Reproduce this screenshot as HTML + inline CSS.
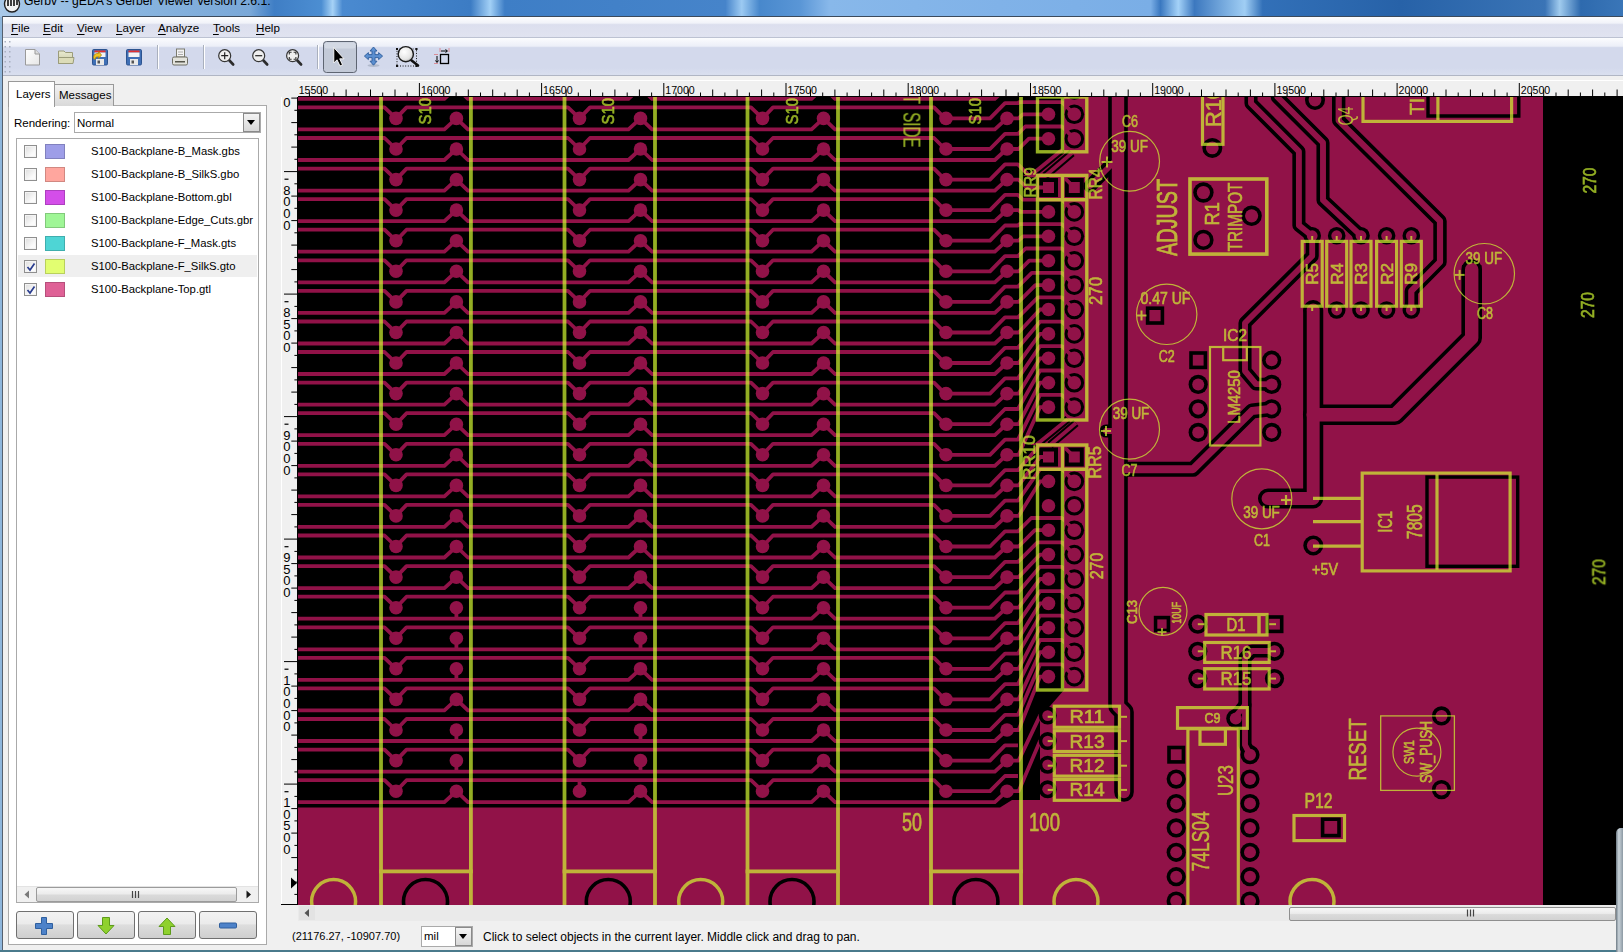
<!DOCTYPE html>
<html><head><meta charset="utf-8">
<style>
*{margin:0;padding:0;box-sizing:border-box}
html,body{width:1623px;height:952px;overflow:hidden;background:#f0f0f0;font-family:"Liberation Sans",sans-serif;color:#000}
.a{position:absolute}
.t{position:absolute;white-space:nowrap;line-height:1}
#title{left:0;top:0;width:1623px;height:17px;background:linear-gradient(90deg,#a9c9e9 0.0%,#8ab6e0 7.4%,#7aa8d8 15.4%,#3f7ec5 16.9%,#4c8ed2 19.8%,#a6d2f6 20.5%,#4a8ad0 21.1%,#3c7cc4 29.0%,#a2d0f6 30.2%,#3e7ec6 31.1%,#4684ca 44.7%,#9ccaf2 45.7%,#4888cc 46.8%,#5a96d6 49.3%,#88b8ea 51.1%,#80b2e8 61.6%,#7aaee6 70.9%,#3a78c0 71.5%,#a4d2f8 72.6%,#3c78bf 73.6%,#a0cef4 76.7%,#3270b8 77.8%,#2762a8 86.3%,#3a74b6 95.2%,#a0cbee 96.1%,#2e6aae 97.4%,#3a76b8 100.0%)}
#menubar{left:3px;top:17px;width:1620px;height:21px;background:linear-gradient(#fdfdfe 0%,#f1f3f9 30%,#dcdfee 38%,#e0e3f0 100%);border-bottom:1px solid #bcc2d2}
.menu{position:absolute;top:20.5px;font-size:11.6px}
.menu u{text-decoration:underline;text-underline-offset:2px;text-decoration-thickness:1px}
#toolbar{left:3px;top:38px;width:1620px;height:38px;background:linear-gradient(#fbfcfe 0%,#eceff8 22%,#d3d9ec 26%,#d3d9ec 80%,#d9dfef 100%);border-bottom:1px solid #b0b6c4}
.sep{position:absolute;top:45px;width:1px;height:24px;background:#a9b0bd;box-shadow:1px 0 0 #fff}
</style></head><body>
<div id="title" class="a"></div>
<svg class="a" style="left:3px;top:0" width="18" height="14" viewBox="0 0 18 14"><ellipse cx="9" cy="4" rx="7.5" ry="8" fill="#f2f2f2" stroke="#222" stroke-width="1.4"/><path d="M5,0 v6 M8,0 v6 M11,0 v6 M14,0 v5" stroke="#111" stroke-width="1.6"/></svg>
<div class="t" style="left:24px;top:-5px;font-size:12.2px;color:#000">Gerbv -- gEDA's Gerber Viewer version 2.6.1:</div>
<div class="a" style="left:0;top:17px;width:2px;height:935px;background:#8eb6dc"></div>
<div class="a" style="left:2px;top:16px;width:1621px;height:1px;background:#3b4a5c"></div>
<div class="a" style="left:2px;top:16px;width:1px;height:934px;background:#55606e"></div>
<div id="menubar" class="a"></div>
<div class="menu" style="left:11px"><u>F</u>ile</div>
<div class="menu" style="left:43px"><u>E</u>dit</div>
<div class="menu" style="left:77px"><u>V</u>iew</div>
<div class="menu" style="left:116px"><u>L</u>ayer</div>
<div class="menu" style="left:158px"><u>A</u>nalyze</div>
<div class="menu" style="left:213px"><u>T</u>ools</div>
<div class="menu" style="left:256px"><u>H</u>elp</div>
<div id="toolbar" class="a"></div>
<div class="sep" style="left:157px"></div>
<div class="sep" style="left:203px"></div>
<div class="sep" style="left:317px"></div>
<svg class="a" style="left:0;top:38px" width="470" height="38" viewBox="0 38 470 38">
<defs><linearGradient id="pg" x1="0" y1="0" x2="1" y2="1"><stop offset="0" stop-color="#ffffff"/><stop offset="1" stop-color="#e6e6e6"/></linearGradient><radialGradient id="lens" cx="0.4" cy="0.35" r="0.7"><stop offset="0" stop-color="#ffffff"/><stop offset="0.7" stop-color="#e4e4e4"/><stop offset="1" stop-color="#b0b0b0"/></radialGradient><linearGradient id="fl" x1="0" y1="0" x2="0" y2="1"><stop offset="0" stop-color="#e9ead0"/><stop offset="1" stop-color="#c9caa6"/></linearGradient></defs>
<rect x="4.5" y="41" width="1.5" height="1.5" fill="#a8b0c0"/><rect x="9" y="41" width="1.5" height="1.5" fill="#a8b0c0"/>
<rect x="4.5" y="46" width="1.5" height="1.5" fill="#a8b0c0"/><rect x="9" y="46" width="1.5" height="1.5" fill="#a8b0c0"/>
<rect x="4.5" y="51" width="1.5" height="1.5" fill="#a8b0c0"/><rect x="9" y="51" width="1.5" height="1.5" fill="#a8b0c0"/>
<rect x="4.5" y="56" width="1.5" height="1.5" fill="#a8b0c0"/><rect x="9" y="56" width="1.5" height="1.5" fill="#a8b0c0"/>
<rect x="4.5" y="61" width="1.5" height="1.5" fill="#a8b0c0"/><rect x="9" y="61" width="1.5" height="1.5" fill="#a8b0c0"/>
<rect x="4.5" y="66" width="1.5" height="1.5" fill="#a8b0c0"/><rect x="9" y="66" width="1.5" height="1.5" fill="#a8b0c0"/>
<rect x="4.5" y="71" width="1.5" height="1.5" fill="#a8b0c0"/><rect x="9" y="71" width="1.5" height="1.5" fill="#a8b0c0"/>
<path d="M25.5,49.5 H35 L39.5,54 V65 H25.5 Z" fill="url(#pg)" stroke="#9a9a9a" stroke-width="1"/>
<path d="M35,49.5 V54 H39.5" fill="#ddd" stroke="#9a9a9a" stroke-width="1"/>
<path d="M58.5,51 H64 L65.5,52.5 H72.5 V63.5 H58.5 Z" fill="url(#fl)" stroke="#9b9c7a" stroke-width="1"/>
<path d="M58.5,57.5 H74 L73,63.5 H58.5 Z" fill="#dcdcb8" stroke="#9b9c7a" stroke-width="1"/>
<rect x="92.5" y="49.5" width="15" height="15.5" rx="1.2" fill="#3f6fb5" stroke="#2c538f" stroke-width="1"/>
<rect x="94.5" y="50.5" width="11" height="2" fill="#e23030"/>
<rect x="94.5" y="52.5" width="11" height="4.5" fill="#f4f4f4"/>
<rect x="96.0" y="59" width="8" height="6" fill="#e8e8e8"/><rect x="97.5" y="60.5" width="2.5" height="3" fill="#555"/>
<path d="M93.5,58 q0,-5 5,-4.5 l0,-2 l3,3.5 l-3,3.5 l0,-2 q-3,-0.5 -3.5,3z" fill="#f2c41c" stroke="#a88310" stroke-width="0.8"/>
<rect x="126.5" y="49.5" width="15" height="15.5" rx="1.2" fill="#3f6fb5" stroke="#2c538f" stroke-width="1"/>
<rect x="128.5" y="50.5" width="11" height="2" fill="#e23030"/>
<rect x="128.5" y="52.5" width="11" height="4.5" fill="#f4f4f4"/>
<rect x="130.0" y="59" width="8" height="6" fill="#e8e8e8"/><rect x="131.5" y="60.5" width="2.5" height="3" fill="#555"/>
<rect x="176.5" y="49" width="8" height="8" fill="#f3f3f3" stroke="#7b7b6e" stroke-width="1"/>
<path d="M178,52 h5 M178,54.5 h5" stroke="#999" stroke-width="0.8"/>
<rect x="172.5" y="57" width="15" height="8" rx="1.5" fill="#e3e3dc" stroke="#6f6f64" stroke-width="1"/>
<rect x="175" y="61" width="10" height="1.5" fill="#55554a"/>
<path d="M229.0,60 L233.2,64.5" stroke="#2c2c2c" stroke-width="2.6" stroke-linecap="round"/>
<circle cx="224.7" cy="55.7" r="6" fill="#efefef" stroke="#353535" stroke-width="1.2"/>
<path d="M221.2,55.7 h7 M224.7,52.2 v7" stroke="#222" stroke-width="1.2"/>
<path d="M263.0,60 L267.2,64.5" stroke="#2c2c2c" stroke-width="2.6" stroke-linecap="round"/>
<circle cx="258.7" cy="55.7" r="6" fill="#efefef" stroke="#353535" stroke-width="1.2"/>
<path d="M255.2,55.7 h7" stroke="#222" stroke-width="1.2"/>
<path d="M296.9,60 L301.1,64.5" stroke="#2c2c2c" stroke-width="2.6" stroke-linecap="round"/>
<circle cx="292.6" cy="55.7" r="6" fill="#efefef" stroke="#353535" stroke-width="1.2"/>
<path d="M289.3,54.5 v-2.3 h2.3 M293.6,52.2 h2.3 v2.3 M295.9,57 v2.3 h-2.3 M291.6,59.3 h-2.3 v-2.3" fill="none" stroke="#333" stroke-width="1.1"/>
<rect x="323.5" y="41.5" width="33" height="31" rx="3" fill="#c3cad8" stroke="#5e6572" stroke-width="1"/>
<rect x="324.5" y="42.5" width="31" height="6" rx="2" fill="#d3d9e4"/>
<path d="M333.8,47.5 V63 L337,59.8 L340,66 L342.5,64.8 L339.7,58.8 H344 Z" fill="#000" stroke="#fff" stroke-width="0.9"/>
<ellipse cx="373.5" cy="65.5" rx="6" ry="1.5" fill="#9aa3b5" opacity="0.6"/>
<path d="M373.5,47 L377,51 H375 V54.6 H378.6 V52.6 L382.6,56.1 L378.6,59.6 V57.6 H375 V61.2 H377 L373.5,65.2 L370,61.2 H372 V57.6 H368.4 V59.6 L364.4,56.1 L368.4,52.6 V54.6 H372 V51 H370 Z" fill="#5b8fd0" stroke="#2e5c9c" stroke-width="0.9"/>
<rect x="397" y="49" width="19.5" height="17" fill="none" stroke="#111" stroke-width="1" stroke-dasharray="1,1.6"/>
<rect x="396.0" y="48.0" width="2" height="2" fill="#111"/>
<rect x="415.5" y="48.0" width="2" height="2" fill="#111"/>
<rect x="396.0" y="65.0" width="2" height="2" fill="#111"/>
<rect x="415.5" y="65.0" width="2" height="2" fill="#111"/>
<path d="M411,60 L418,65.5" stroke="#111" stroke-width="2.6" stroke-linecap="round"/>
<circle cx="405.8" cy="54.2" r="7.6" fill="url(#lens)" stroke="#1a1a1a" stroke-width="1.4"/>
<rect x="440.5" y="54.5" width="8" height="9" fill="none" stroke="#000" stroke-width="1.3"/>
<path d="M440,48.5 v4 M449,48.5 v4 M434.5,54.5 h4 M434.5,63.5 h4" stroke="#e03030" stroke-width="0.9" stroke-dasharray="1,1"/>
<path d="M441,51 h6 M445.5,49.5 l2,1.5 l-2,1.5 M437,56 v6 M435.5,60.5 l1.5,2 l1.5,-2" fill="none" stroke="#000" stroke-width="1"/>
</svg>

<!-- left panel -->
<div class="a" style="left:8px;top:105px;width:259px;height:840px;border:1px solid #aaa;background:#fff"></div>
<div class="a" style="left:54px;top:84px;width:60px;height:22px;border:1px solid #999;border-bottom:none;background:linear-gradient(#f2f2f2,#d9d9d9)"></div>
<div class="a" style="left:8px;top:81px;width:47px;height:26px;border:1px solid #999;border-bottom:none;background:#fff"></div>
<div class="t" style="left:16px;top:89px;font-size:11.5px">Layers</div>
<div class="t" style="left:59px;top:90px;font-size:11.5px">Messages</div>
<div class="t" style="left:14px;top:118px;font-size:11.5px">Rendering:</div>
<div class="a" style="left:74px;top:112px;width:187px;height:21px;border:1px solid #aaa;background:#fff"></div>
<div class="t" style="left:77px;top:118px;font-size:11.5px">Normal</div>
<div class="a" style="left:243px;top:113px;width:17px;height:19px;border:1px solid #8a8a8a;background:linear-gradient(#f4f4f4,#d8d8d8)"></div>
<div class="a" style="left:247px;top:120px;width:0;height:0;border-left:4.5px solid transparent;border-right:4.5px solid transparent;border-top:5px solid #000"></div>
<div class="a" style="left:16px;top:138px;width:243px;height:765px;border:1px solid #aaa;background:#fff"></div>
<div class="a" style="left:24px;top:145.0px;width:13px;height:13px;border:1px solid #8f8f8f;background:linear-gradient(135deg,#dcdcdc,#fbfbfb 70%);box-shadow:inset 0 0 0 1px #f4f4f4"></div>
<div class="a" style="left:45px;top:144.0px;width:20px;height:15px;background:rgb(158,158,232);border:1px solid rgba(0,0,0,0.18)"></div>
<div class="t" style="left:91px;top:146.2px;font-size:11.3px">S100-Backplane-B_Mask.gbs</div>
<div class="a" style="left:24px;top:168.0px;width:13px;height:13px;border:1px solid #8f8f8f;background:linear-gradient(135deg,#dcdcdc,#fbfbfb 70%);box-shadow:inset 0 0 0 1px #f4f4f4"></div>
<div class="a" style="left:45px;top:167.0px;width:20px;height:15px;background:rgb(255,166,158);border:1px solid rgba(0,0,0,0.18)"></div>
<div class="t" style="left:91px;top:169.2px;font-size:11.3px">S100-Backplane-B_SilkS.gbo</div>
<div class="a" style="left:24px;top:191.0px;width:13px;height:13px;border:1px solid #8f8f8f;background:linear-gradient(135deg,#dcdcdc,#fbfbfb 70%);box-shadow:inset 0 0 0 1px #f4f4f4"></div>
<div class="a" style="left:45px;top:190.0px;width:20px;height:15px;background:rgb(212,78,233);border:1px solid rgba(0,0,0,0.18)"></div>
<div class="t" style="left:91px;top:192.2px;font-size:11.3px">S100-Backplane-Bottom.gbl</div>
<div class="a" style="left:24px;top:214.0px;width:13px;height:13px;border:1px solid #8f8f8f;background:linear-gradient(135deg,#dcdcdc,#fbfbfb 70%);box-shadow:inset 0 0 0 1px #f4f4f4"></div>
<div class="a" style="left:45px;top:213.0px;width:20px;height:15px;background:rgb(159,246,150);border:1px solid rgba(0,0,0,0.18)"></div>
<div class="t" style="left:91px;top:215.2px;font-size:11.3px">S100-Backplane-Edge_Cuts.gbr</div>
<div class="a" style="left:24px;top:237.0px;width:13px;height:13px;border:1px solid #8f8f8f;background:linear-gradient(135deg,#dcdcdc,#fbfbfb 70%);box-shadow:inset 0 0 0 1px #f4f4f4"></div>
<div class="a" style="left:45px;top:236.0px;width:20px;height:15px;background:rgb(78,213,213);border:1px solid rgba(0,0,0,0.18)"></div>
<div class="t" style="left:91px;top:238.2px;font-size:11.3px">S100-Backplane-F_Mask.gts</div>
<div class="a" style="left:18px;top:255px;width:239px;height:22px;background:#efefef"></div>
<div class="a" style="left:24px;top:260.0px;width:13px;height:13px;border:1px solid #8f8f8f;background:linear-gradient(135deg,#dcdcdc,#fbfbfb 70%);box-shadow:inset 0 0 0 1px #f4f4f4"></div>
<svg class="a" style="left:26px;top:261.5px" width="10" height="10" viewBox="0 0 10 10"><path d="M1.5,5 L4,8 L8.5,1.5" fill="none" stroke="#2a3d8f" stroke-width="1.7"/></svg>
<div class="a" style="left:45px;top:259.0px;width:20px;height:15px;background:rgb(226,254,113);border:1px solid rgba(0,0,0,0.18)"></div>
<div class="t" style="left:91px;top:261.2px;font-size:11.3px">S100-Backplane-F_SilkS.gto</div>
<div class="a" style="left:24px;top:283.0px;width:13px;height:13px;border:1px solid #8f8f8f;background:linear-gradient(135deg,#dcdcdc,#fbfbfb 70%);box-shadow:inset 0 0 0 1px #f4f4f4"></div>
<svg class="a" style="left:26px;top:284.5px" width="10" height="10" viewBox="0 0 10 10"><path d="M1.5,5 L4,8 L8.5,1.5" fill="none" stroke="#2a3d8f" stroke-width="1.7"/></svg>
<div class="a" style="left:45px;top:282.0px;width:20px;height:15px;background:rgb(223,97,150);border:1px solid rgba(0,0,0,0.18)"></div>
<div class="t" style="left:91px;top:284.2px;font-size:11.3px">S100-Backplane-Top.gtl</div>
<!-- hscroll in list -->
<div class="a" style="left:17px;top:886px;width:241px;height:16px;background:#f0f0f0;border-top:1px solid #e3e3e3"></div>
<div class="a" style="left:36px;top:887px;width:201px;height:15px;border:1px solid #9b9b9b;border-radius:2px;background:linear-gradient(#f7f7f7 0%,#ececec 45%,#dadada 55%,#d2d2d2 100%)"></div>
<svg class="a" style="left:20px;top:887px" width="240" height="16" viewBox="20 887 240 16"><path d="M29,890.5 L24.5,894.5 L29,898.5Z" fill="#7a7a7a"/><path d="M246.5,890.5 L251,894.5 L246.5,898.5Z" fill="#1a1a1a"/><path d="M132.5,891 v7 M135.5,891 v7 M138.5,891 v7" stroke="#444" stroke-width="1.2"/></svg>
<div class="a" style="left:16px;top:911px;width:58px;height:28px;border:1px solid #707070;border-radius:3px;background:linear-gradient(#f2f2f2 0%,#ebebeb 45%,#dddddd 50%,#cfcfcf 100%)"></div>
<div class="a" style="left:77px;top:911px;width:58px;height:28px;border:1px solid #707070;border-radius:3px;background:linear-gradient(#f2f2f2 0%,#ebebeb 45%,#dddddd 50%,#cfcfcf 100%)"></div>
<div class="a" style="left:138px;top:911px;width:58px;height:28px;border:1px solid #707070;border-radius:3px;background:linear-gradient(#f2f2f2 0%,#ebebeb 45%,#dddddd 50%,#cfcfcf 100%)"></div>
<div class="a" style="left:199px;top:911px;width:58px;height:28px;border:1px solid #707070;border-radius:3px;background:linear-gradient(#f2f2f2 0%,#ebebeb 45%,#dddddd 50%,#cfcfcf 100%)"></div>
<svg class="a" style="left:34px;top:916px" width="20" height="20" viewBox="0 0 20 20"><path d="M7.5,1.5 h5 v6 h6 v5 h-6 v6 h-5 v-6 h-6 v-5 h6z" fill="#4d82c9" stroke="#2f5f9e" stroke-width="1"/></svg>
<svg class="a" style="left:96px;top:916px" width="20" height="20" viewBox="0 0 20 20"><path d="M6.5,1.5 h7 v8 h4.5 l-8,8.5 l-8,-8.5 h4.5z" fill="#8fd12e" stroke="#5d9b1a" stroke-width="1"/></svg>
<svg class="a" style="left:157px;top:916px" width="20" height="20" viewBox="0 0 20 20"><path d="M6.5,18.5 h7 v-8 h4.5 l-8,-8.5 l-8,8.5 h4.5z" fill="#8fd12e" stroke="#5d9b1a" stroke-width="1"/></svg>
<svg class="a" style="left:218px;top:921px" width="20" height="10" viewBox="0 0 20 10"><rect x="1.5" y="2" width="17" height="5" rx="1" fill="#4d82c9" stroke="#2f5f9e" stroke-width="1"/></svg>

<!-- rulers -->
<div class="a" style="left:298px;top:80px;width:1325px;height:17px;background:#f0f0f0;border-top:1px solid #fff"></div>
<div class="a" style="left:281px;top:97px;width:17px;height:808px;background:#f0f0f0;border-left:1px solid #fff"></div>
<div class="a" style="left:298px;top:96px;width:1325px;height:1px;background:#000"></div>
<div class="a" style="left:297px;top:97px;width:1px;height:808px;background:#000"></div>
<div class="a" style="left:281px;top:904px;width:17px;height:1px;background:#000"></div>
<svg class="a" style="left:0;top:0" width="1623" height="952" viewBox="0 0 1623 952"><defs><clipPath id="rc"><rect x="0" y="80" width="298" height="825"/><rect x="298" y="80" width="1325" height="17"/><rect x="0" y="98" width="1623" height="807"/></clipPath></defs><g clip-path="url(#rc)">
<path d="M309.4,92.5 V96 M321.6,89.5 V96 M333.9,92.5 V96 M346.1,89.5 V96 M358.3,92.5 V96 M370.5,89.5 V96 M382.7,92.5 V96 M395.0,89.5 V96 M407.2,92.5 V96 M419.4,83 V96 M431.6,92.5 V96 M443.8,89.5 V96 M456.1,92.5 V96 M468.3,89.5 V96 M480.5,92.5 V96 M492.7,89.5 V96 M504.9,92.5 V96 M517.2,89.5 V96 M529.4,92.5 V96 M541.6,83 V96 M553.8,92.5 V96 M566.1,89.5 V96 M578.3,92.5 V96 M590.5,89.5 V96 M602.7,92.5 V96 M614.9,89.5 V96 M627.2,92.5 V96 M639.4,89.5 V96 M651.6,92.5 V96 M663.8,83 V96 M676.0,92.5 V96 M688.3,89.5 V96 M700.5,92.5 V96 M712.7,89.5 V96 M724.9,92.5 V96 M737.1,89.5 V96 M749.4,92.5 V96 M761.6,89.5 V96 M773.8,92.5 V96 M786.0,83 V96 M798.3,92.5 V96 M810.5,89.5 V96 M822.7,92.5 V96 M834.9,89.5 V96 M847.1,92.5 V96 M859.4,89.5 V96 M871.6,92.5 V96 M883.8,89.5 V96 M896.0,92.5 V96 M908.2,83 V96 M920.5,92.5 V96 M932.7,89.5 V96 M944.9,92.5 V96 M957.1,89.5 V96 M969.3,92.5 V96 M981.6,89.5 V96 M993.8,92.5 V96 M1006.0,89.5 V96 M1018.2,92.5 V96 M1030.5,83 V96 M1042.7,92.5 V96 M1054.9,89.5 V96 M1067.1,92.5 V96 M1079.3,89.5 V96 M1091.6,92.5 V96 M1103.8,89.5 V96 M1116.0,92.5 V96 M1128.2,89.5 V96 M1140.4,92.5 V96 M1152.7,83 V96 M1164.9,92.5 V96 M1177.1,89.5 V96 M1189.3,92.5 V96 M1201.5,89.5 V96 M1213.8,92.5 V96 M1226.0,89.5 V96 M1238.2,92.5 V96 M1250.4,89.5 V96 M1262.6,92.5 V96 M1274.9,83 V96 M1287.1,92.5 V96 M1299.3,89.5 V96 M1311.5,92.5 V96 M1323.8,89.5 V96 M1336.0,92.5 V96 M1348.2,89.5 V96 M1360.4,92.5 V96 M1372.6,89.5 V96 M1384.9,92.5 V96 M1397.1,83 V96 M1409.3,92.5 V96 M1421.5,89.5 V96 M1433.7,92.5 V96 M1446.0,89.5 V96 M1458.2,92.5 V96 M1470.4,89.5 V96 M1482.6,92.5 V96 M1494.8,89.5 V96 M1507.1,92.5 V96 M1519.3,83 V96 M1531.5,92.5 V96 M1543.7,89.5 V96 M1556.0,92.5 V96 M1568.2,89.5 V96 M1580.4,92.5 V96 M1592.6,89.5 V96 M1604.8,92.5 V96 M1617.1,89.5 V96" stroke="#000" stroke-width="1" fill="none"/>
<text x="298.7" y="93.6" font-family="Liberation Sans" font-size="10.6" fill="#000">15500</text>
<text x="420.9" y="93.6" font-family="Liberation Sans" font-size="10.6" fill="#000">16000</text>
<text x="543.1" y="93.6" font-family="Liberation Sans" font-size="10.6" fill="#000">16500</text>
<text x="665.3" y="93.6" font-family="Liberation Sans" font-size="10.6" fill="#000">17000</text>
<text x="787.5" y="93.6" font-family="Liberation Sans" font-size="10.6" fill="#000">17500</text>
<text x="909.7" y="93.6" font-family="Liberation Sans" font-size="10.6" fill="#000">18000</text>
<text x="1032.0" y="93.6" font-family="Liberation Sans" font-size="10.6" fill="#000">18500</text>
<text x="1154.2" y="93.6" font-family="Liberation Sans" font-size="10.6" fill="#000">19000</text>
<text x="1276.4" y="93.6" font-family="Liberation Sans" font-size="10.6" fill="#000">19500</text>
<text x="1398.6" y="93.6" font-family="Liberation Sans" font-size="10.6" fill="#000">20000</text>
<text x="1520.8" y="93.6" font-family="Liberation Sans" font-size="10.6" fill="#000">20500</text>
<path d="M291.3,98.1 H297 M294.4,110.3 H297 M291.3,122.6 H297 M294.4,134.8 H297 M291.3,147.1 H297 M294.4,159.3 H297 M284,171.6 H297 M294.4,183.8 H297 M291.3,196.1 H297 M294.4,208.3 H297 M291.3,220.6 H297 M294.4,232.8 H297 M291.3,245.1 H297 M294.4,257.4 H297 M291.3,269.6 H297 M294.4,281.9 H297 M284,294.1 H297 M294.4,306.4 H297 M291.3,318.6 H297 M294.4,330.9 H297 M291.3,343.1 H297 M294.4,355.4 H297 M291.3,367.6 H297 M294.4,379.9 H297 M291.3,392.1 H297 M294.4,404.4 H297 M284,416.6 H297 M294.4,428.9 H297 M291.3,441.1 H297 M294.4,453.4 H297 M291.3,465.6 H297 M294.4,477.9 H297 M291.3,490.1 H297 M294.4,502.4 H297 M291.3,514.6 H297 M294.4,526.9 H297 M284,539.1 H297 M294.4,551.4 H297 M291.3,563.6 H297 M294.4,575.9 H297 M291.3,588.1 H297 M294.4,600.4 H297 M291.3,612.6 H297 M294.4,624.9 H297 M291.3,637.1 H297 M294.4,649.4 H297 M284,661.6 H297 M294.4,673.9 H297 M291.3,686.1 H297 M294.4,698.4 H297 M291.3,710.6 H297 M294.4,722.9 H297 M291.3,735.1 H297 M294.4,747.4 H297 M291.3,759.6 H297 M294.4,771.9 H297 M284,784.1 H297 M294.4,796.4 H297 M291.3,808.6 H297 M294.4,820.9 H297 M291.3,833.1 H297 M294.4,845.4 H297 M291.3,857.6 H297 M294.4,869.9 H297 M291.3,882.1 H297 M294.4,894.4 H297" stroke="#000" stroke-width="1" fill="none"/>
<rect x="284.5" y="56.1" width="4" height="1.2" fill="#000"/>
<text x="283.2" y="107.0" font-family="Liberation Sans" font-size="13" transform="scale(1,1)" fill="#000">0</text>
<rect x="284.5" y="178.6" width="4" height="1.2" fill="#000"/>
<text x="283.2" y="194.7" font-family="Liberation Sans" font-size="13" transform="scale(1,1)" fill="#000">8</text>
<text x="283.2" y="206.3" font-family="Liberation Sans" font-size="13" transform="scale(1,1)" fill="#000">0</text>
<text x="283.2" y="217.9" font-family="Liberation Sans" font-size="13" transform="scale(1,1)" fill="#000">0</text>
<text x="283.2" y="229.5" font-family="Liberation Sans" font-size="13" transform="scale(1,1)" fill="#000">0</text>
<rect x="284.5" y="301.1" width="4" height="1.2" fill="#000"/>
<text x="283.2" y="317.2" font-family="Liberation Sans" font-size="13" transform="scale(1,1)" fill="#000">8</text>
<text x="283.2" y="328.8" font-family="Liberation Sans" font-size="13" transform="scale(1,1)" fill="#000">5</text>
<text x="283.2" y="340.4" font-family="Liberation Sans" font-size="13" transform="scale(1,1)" fill="#000">0</text>
<text x="283.2" y="352.0" font-family="Liberation Sans" font-size="13" transform="scale(1,1)" fill="#000">0</text>
<rect x="284.5" y="423.6" width="4" height="1.2" fill="#000"/>
<text x="283.2" y="439.7" font-family="Liberation Sans" font-size="13" transform="scale(1,1)" fill="#000">9</text>
<text x="283.2" y="451.3" font-family="Liberation Sans" font-size="13" transform="scale(1,1)" fill="#000">0</text>
<text x="283.2" y="462.9" font-family="Liberation Sans" font-size="13" transform="scale(1,1)" fill="#000">0</text>
<text x="283.2" y="474.5" font-family="Liberation Sans" font-size="13" transform="scale(1,1)" fill="#000">0</text>
<rect x="284.5" y="546.1" width="4" height="1.2" fill="#000"/>
<text x="283.2" y="562.2" font-family="Liberation Sans" font-size="13" transform="scale(1,1)" fill="#000">9</text>
<text x="283.2" y="573.8" font-family="Liberation Sans" font-size="13" transform="scale(1,1)" fill="#000">5</text>
<text x="283.2" y="585.4" font-family="Liberation Sans" font-size="13" transform="scale(1,1)" fill="#000">0</text>
<text x="283.2" y="597.0" font-family="Liberation Sans" font-size="13" transform="scale(1,1)" fill="#000">0</text>
<rect x="284.5" y="668.6" width="4" height="1.2" fill="#000"/>
<text x="283.2" y="684.7" font-family="Liberation Sans" font-size="13" transform="scale(1,1)" fill="#000">1</text>
<text x="283.2" y="696.3" font-family="Liberation Sans" font-size="13" transform="scale(1,1)" fill="#000">0</text>
<text x="283.2" y="707.9" font-family="Liberation Sans" font-size="13" transform="scale(1,1)" fill="#000">0</text>
<text x="283.2" y="719.5" font-family="Liberation Sans" font-size="13" transform="scale(1,1)" fill="#000">0</text>
<text x="283.2" y="731.1" font-family="Liberation Sans" font-size="13" transform="scale(1,1)" fill="#000">0</text>
<rect x="284.5" y="791.1" width="4" height="1.2" fill="#000"/>
<text x="283.2" y="807.2" font-family="Liberation Sans" font-size="13" transform="scale(1,1)" fill="#000">1</text>
<text x="283.2" y="818.8" font-family="Liberation Sans" font-size="13" transform="scale(1,1)" fill="#000">0</text>
<text x="283.2" y="830.4" font-family="Liberation Sans" font-size="13" transform="scale(1,1)" fill="#000">5</text>
<text x="283.2" y="842.0" font-family="Liberation Sans" font-size="13" transform="scale(1,1)" fill="#000">0</text>
<text x="283.2" y="853.6" font-family="Liberation Sans" font-size="13" transform="scale(1,1)" fill="#000">0</text>
</g></svg>
<svg width="1325" height="808" viewBox="298 97 1325 808" style="position:absolute;left:298px;top:97px;display:block">
<rect x="298" y="97" width="1325" height="808" fill="#000"/>
<g opacity="0.694"><rect x="298" y="97" width="1245" height="808" fill="rgb(209,27,104)"/><path d="M298,97 L1064,97 L1064,690 L1050,706 L1040,716 L1040,800 L1012,800 L1000,807.5 L298,807.5 Z" fill="#000"/><path d="M1059,152 L1087,152 L1087,200 L1037,200 L1037,176 L1023,176 Z M1066,420 L1087,420 L1087,470 L1037,470 L1037,445 L1030,445 Z" fill="rgb(209,27,104)"/><path d="M1030,176 L1062,150" stroke="#000" stroke-width="8"/><path d="M1030,176 L1062,150" stroke="rgb(209,27,104)" stroke-width="3.8"/><path d="M1045,176 L1072,153" stroke="#000" stroke-width="8"/><path d="M1045,176 L1072,153" stroke="rgb(209,27,104)" stroke-width="3.8"/><path d="M1036,445 L1068,419" stroke="#000" stroke-width="8"/><path d="M1036,445 L1068,419" stroke="rgb(209,27,104)" stroke-width="3.8"/><path d="M1050,445 L1076,423" stroke="#000" stroke-width="8"/><path d="M1050,445 L1076,423" stroke="rgb(209,27,104)" stroke-width="3.8"/><rect x="1039" y="178" width="19" height="19" fill="#000"/><rect x="1064.8" y="178" width="19" height="19" fill="#000"/><rect x="1039" y="447.5" width="19" height="19" fill="#000"/><rect x="1064.8" y="447.5" width="19" height="19" fill="#000"/><circle cx="1074.3" cy="89.9" r="9.8" fill="#000"/><circle cx="1074.3" cy="114.3" r="9.8" fill="#000"/><circle cx="1074.3" cy="138.7" r="9.8" fill="#000"/><circle cx="1074.3" cy="211.9" r="9.8" fill="#000"/><circle cx="1074.3" cy="236.3" r="9.8" fill="#000"/><circle cx="1074.3" cy="260.7" r="9.8" fill="#000"/><circle cx="1074.3" cy="285.1" r="9.8" fill="#000"/><circle cx="1074.3" cy="309.5" r="9.8" fill="#000"/><circle cx="1074.3" cy="333.9" r="9.8" fill="#000"/><circle cx="1074.3" cy="358.3" r="9.8" fill="#000"/><circle cx="1074.3" cy="382.7" r="9.8" fill="#000"/><circle cx="1074.3" cy="407.1" r="9.8" fill="#000"/><circle cx="1074.3" cy="481.4" r="9.8" fill="#000"/><circle cx="1074.3" cy="505.8" r="9.8" fill="#000"/><circle cx="1074.3" cy="530.2" r="9.8" fill="#000"/><circle cx="1074.3" cy="554.6" r="9.8" fill="#000"/><circle cx="1074.3" cy="579" r="9.8" fill="#000"/><circle cx="1074.3" cy="603.4" r="9.8" fill="#000"/><circle cx="1074.3" cy="627.8" r="9.8" fill="#000"/><circle cx="1074.3" cy="652.2" r="9.8" fill="#000"/><circle cx="1074.3" cy="676.6" r="9.8" fill="#000"/><path d="M298,76.8 L384.5,76.8 L396,87.8 L406.5,76.8 L568,76.8 L579.5,87.8 L590,76.8 L751,76.8 L762.5,87.8 L773,76.8 L934,76.8 L945,87.8 L990,87.8 L1005,72.6 L1018,72.6 L1023.1,77.7 L1062,77.7 L1074.3,89.9" fill="none" stroke="rgb(209,27,104)" stroke-width="3.8" stroke-linejoin="round"/><path d="M298,98.8 L444.4,98.8 L456.4,87.8 L467.9,98.8 L628.5,98.8 L640.5,87.8 L652,98.8 L811.5,98.8 L823.5,87.8 L835,98.8 L994.8,98.8 L1006.8,87.8 L1018.6,87.8 L1020.7,89.9 L1048.6,89.9" fill="none" stroke="rgb(209,27,104)" stroke-width="3.8" stroke-linejoin="round"/><path d="M298,107.4 L384.5,107.4 L396,118.4 L406.5,107.4 L568,107.4 L579.5,118.4 L590,107.4 L751,107.4 L762.5,118.4 L773,107.4 L934,107.4 L945,118.4 L990,118.4 L1005,103.2 L1018,103.2 L1019.1,102.1 L1062,102.1 L1074.3,114.3" fill="none" stroke="rgb(209,27,104)" stroke-width="3.8" stroke-linejoin="round"/><path d="M298,129.4 L444.4,129.4 L456.4,118.4 L467.9,129.4 L628.5,129.4 L640.5,118.4 L652,129.4 L811.5,129.4 L823.5,118.4 L835,129.4 L994.8,129.4 L1006.8,118.4 L1018.6,118.4 L1022.7,114.3 L1048.6,114.3" fill="none" stroke="rgb(209,27,104)" stroke-width="3.8" stroke-linejoin="round"/><path d="M298,138 L384.5,138 L396,149 L406.5,138 L568,138 L579.5,149 L590,138 L751,138 L762.5,149 L773,138 L934,138 L945,149 L990,149 L1005,133.8 L1018,133.8 L1025.3,126.5 L1062,126.5 L1074.3,138.7" fill="none" stroke="rgb(209,27,104)" stroke-width="3.8" stroke-linejoin="round"/><path d="M298,160 L444.4,160 L456.4,149 L467.9,160 L628.5,160 L640.5,149 L652,160 L811.5,160 L823.5,149 L835,160 L994.8,160 L1006.8,149 L1018.6,149 L1028.9,138.7 L1048.6,138.7" fill="none" stroke="rgb(209,27,104)" stroke-width="3.8" stroke-linejoin="round"/><path d="M298,168.6 L384.5,168.6 L396,179.6 L406.5,168.6 L568,168.6 L579.5,179.6 L590,168.6 L751,168.6 L762.5,179.6 L773,168.6 L934,168.6 L945,179.6 L990,179.6 L1005,164.4 L1018,164.4 L1028.9,175.3 L1062,175.3 L1074.3,187.5" fill="none" stroke="rgb(209,27,104)" stroke-width="3.8" stroke-linejoin="round"/><path d="M298,190.6 L444.4,190.6 L456.4,179.6 L467.9,190.6 L628.5,190.6 L640.5,179.6 L652,190.6 L811.5,190.6 L823.5,179.6 L835,190.6 L994.8,190.6 L1006.8,179.6 L1018.6,179.6 L1026.5,187.5 L1048.6,187.5" fill="none" stroke="rgb(209,27,104)" stroke-width="3.8" stroke-linejoin="round"/><path d="M298,199.1 L384.5,199.1 L396,210.1 L406.5,199.1 L568,199.1 L579.5,210.1 L590,199.1 L751,199.1 L762.5,210.1 L773,199.1 L934,199.1 L945,210.1 L990,210.1 L1005,194.9 L1018,194.9 L1022.8,199.7 L1062,199.7 L1074.3,211.9" fill="none" stroke="rgb(209,27,104)" stroke-width="3.8" stroke-linejoin="round"/><path d="M298,221.1 L444.4,221.1 L456.4,210.1 L467.9,221.1 L628.5,221.1 L640.5,210.1 L652,221.1 L811.5,221.1 L823.5,210.1 L835,221.1 L994.8,221.1 L1006.8,210.1 L1018.6,210.1 L1020.4,211.9 L1048.6,211.9" fill="none" stroke="rgb(209,27,104)" stroke-width="3.8" stroke-linejoin="round"/><path d="M298,229.7 L384.5,229.7 L396,240.7 L406.5,229.7 L568,229.7 L579.5,240.7 L590,229.7 L751,229.7 L762.5,240.7 L773,229.7 L934,229.7 L945,240.7 L990,240.7 L1005,225.5 L1018,225.5 L1019.4,224.1 L1062,224.1 L1074.3,236.3" fill="none" stroke="rgb(209,27,104)" stroke-width="3.8" stroke-linejoin="round"/><path d="M298,251.7 L444.4,251.7 L456.4,240.7 L467.9,251.7 L628.5,251.7 L640.5,240.7 L652,251.7 L811.5,251.7 L823.5,240.7 L835,251.7 L994.8,251.7 L1006.8,240.7 L1018.6,240.7 L1023,236.3 L1048.6,236.3" fill="none" stroke="rgb(209,27,104)" stroke-width="3.8" stroke-linejoin="round"/><path d="M298,260.3 L384.5,260.3 L396,271.3 L406.5,260.3 L568,260.3 L579.5,271.3 L590,260.3 L751,260.3 L762.5,271.3 L773,260.3 L934,260.3 L945,271.3 L990,271.3 L1005,256.1 L1018,256.1 L1025.6,248.5 L1062,248.5 L1074.3,260.7" fill="none" stroke="rgb(209,27,104)" stroke-width="3.8" stroke-linejoin="round"/><path d="M298,282.3 L444.4,282.3 L456.4,271.3 L467.9,282.3 L628.5,282.3 L640.5,271.3 L652,282.3 L811.5,282.3 L823.5,271.3 L835,282.3 L994.8,282.3 L1006.8,271.3 L1018.6,271.3 L1029.2,260.7 L1048.6,260.7" fill="none" stroke="rgb(209,27,104)" stroke-width="3.8" stroke-linejoin="round"/><path d="M298,290.9 L384.5,290.9 L396,301.9 L406.5,290.9 L568,290.9 L579.5,301.9 L590,290.9 L751,290.9 L762.5,301.9 L773,290.9 L934,290.9 L945,301.9 L990,301.9 L1005,286.7 L1018,286.7 L1031.8,272.9 L1062,272.9 L1074.3,285.1" fill="none" stroke="rgb(209,27,104)" stroke-width="3.8" stroke-linejoin="round"/><path d="M298,312.9 L444.4,312.9 L456.4,301.9 L467.9,312.9 L628.5,312.9 L640.5,301.9 L652,312.9 L811.5,312.9 L823.5,301.9 L835,312.9 L994.8,312.9 L1006.8,301.9 L1018.6,301.9 L1035.4,285.1 L1048.6,285.1" fill="none" stroke="rgb(209,27,104)" stroke-width="3.8" stroke-linejoin="round"/><path d="M298,321.5 L384.5,321.5 L396,332.5 L406.5,321.5 L568,321.5 L579.5,332.5 L590,321.5 L751,321.5 L762.5,332.5 L773,321.5 L934,321.5 L945,332.5 L990,332.5 L1005,317.3 L1018,317.3 L1038,297.3 L1062,297.3 L1074.3,309.5" fill="none" stroke="rgb(209,27,104)" stroke-width="3.8" stroke-linejoin="round"/><path d="M298,343.5 L444.4,343.5 L456.4,332.5 L467.9,343.5 L628.5,343.5 L640.5,332.5 L652,343.5 L811.5,343.5 L823.5,332.5 L835,343.5 L994.8,343.5 L1006.8,332.5 L1018.6,332.5 L1040,309.5 L1048.6,309.5" fill="none" stroke="rgb(209,27,104)" stroke-width="3.8" stroke-linejoin="round"/><path d="M298,352 L384.5,352 L396,363 L406.5,352 L568,352 L579.5,363 L590,352 L751,352 L762.5,363 L773,352 L934,352 L945,363 L990,363 L1005,347.8 L1018,347.8 L1040,321.7 L1062,321.7 L1074.3,333.9" fill="none" stroke="rgb(209,27,104)" stroke-width="3.8" stroke-linejoin="round"/><path d="M298,374 L444.4,374 L456.4,363 L467.9,374 L628.5,374 L640.5,363 L652,374 L811.5,374 L823.5,363 L835,374 L994.8,374 L1006.8,363 L1018.6,363 L1040,333.9 L1048.6,333.9" fill="none" stroke="rgb(209,27,104)" stroke-width="3.8" stroke-linejoin="round"/><path d="M298,382.6 L384.5,382.6 L396,393.6 L406.5,382.6 L568,382.6 L579.5,393.6 L590,382.6 L751,382.6 L762.5,393.6 L773,382.6 L934,382.6 L945,393.6 L990,393.6 L1005,378.4 L1018,378.4 L1040,346.1 L1062,346.1 L1074.3,358.3" fill="none" stroke="rgb(209,27,104)" stroke-width="3.8" stroke-linejoin="round"/><path d="M298,404.6 L444.4,404.6 L456.4,393.6 L467.9,404.6 L628.5,404.6 L640.5,393.6 L652,404.6 L811.5,404.6 L823.5,393.6 L835,404.6 L994.8,404.6 L1006.8,393.6 L1018.6,393.6 L1040,358.3 L1048.6,358.3" fill="none" stroke="rgb(209,27,104)" stroke-width="3.8" stroke-linejoin="round"/><path d="M298,413.2 L384.5,413.2 L396,424.2 L406.5,413.2 L568,413.2 L579.5,424.2 L590,413.2 L751,413.2 L762.5,424.2 L773,413.2 L934,413.2 L945,424.2 L990,424.2 L1005,409 L1018,409 L1040,370.5 L1062,370.5 L1074.3,382.7" fill="none" stroke="rgb(209,27,104)" stroke-width="3.8" stroke-linejoin="round"/><path d="M298,435.2 L444.4,435.2 L456.4,424.2 L467.9,435.2 L628.5,435.2 L640.5,424.2 L652,435.2 L811.5,435.2 L823.5,424.2 L835,435.2 L994.8,435.2 L1006.8,424.2 L1018.6,424.2 L1040,382.7 L1048.6,382.7" fill="none" stroke="rgb(209,27,104)" stroke-width="3.8" stroke-linejoin="round"/><path d="M298,443.8 L384.5,443.8 L396,454.8 L406.5,443.8 L568,443.8 L579.5,454.8 L590,443.8 L751,443.8 L762.5,454.8 L773,443.8 L934,443.8 L945,454.8 L990,454.8 L1005,439.6 L1018,439.6 L1040,394.9 L1062,394.9 L1074.3,407.1" fill="none" stroke="rgb(209,27,104)" stroke-width="3.8" stroke-linejoin="round"/><path d="M298,465.8 L444.4,465.8 L456.4,454.8 L467.9,465.8 L628.5,465.8 L640.5,454.8 L652,465.8 L811.5,465.8 L823.5,454.8 L835,465.8 L994.8,465.8 L1006.8,454.8 L1018.6,454.8 L1040,407.1 L1048.6,407.1" fill="none" stroke="rgb(209,27,104)" stroke-width="3.8" stroke-linejoin="round"/><path d="M298,474.4 L384.5,474.4 L396,485.4 L406.5,474.4 L568,474.4 L579.5,485.4 L590,474.4 L751,474.4 L762.5,485.4 L773,474.4 L934,474.4 L945,485.4 L990,485.4 L1005,470.2 L1018,470.2 L1040,444.8 L1062,444.8 L1074.3,457" fill="none" stroke="rgb(209,27,104)" stroke-width="3.8" stroke-linejoin="round"/><path d="M298,496.4 L444.4,496.4 L456.4,485.4 L467.9,496.4 L628.5,496.4 L640.5,485.4 L652,496.4 L811.5,496.4 L823.5,485.4 L835,496.4 L994.8,496.4 L1006.8,485.4 L1018.6,485.4 L1040,457 L1048.6,457" fill="none" stroke="rgb(209,27,104)" stroke-width="3.8" stroke-linejoin="round"/><path d="M298,504.9 L384.5,504.9 L396,515.9 L406.5,504.9 L568,504.9 L579.5,515.9 L590,504.9 L751,504.9 L762.5,515.9 L773,504.9 L934,504.9 L945,515.9 L990,515.9 L1005,500.7 L1018,500.7 L1040,469.2 L1062,469.2 L1074.3,481.4" fill="none" stroke="rgb(209,27,104)" stroke-width="3.8" stroke-linejoin="round"/><path d="M298,526.9 L444.4,526.9 L456.4,515.9 L467.9,526.9 L628.5,526.9 L640.5,515.9 L652,526.9 L811.5,526.9 L823.5,515.9 L835,526.9 L994.8,526.9 L1006.8,515.9 L1018.6,515.9 L1040,481.4 L1048.6,481.4" fill="none" stroke="rgb(209,27,104)" stroke-width="3.8" stroke-linejoin="round"/><path d="M298,535.5 L384.5,535.5 L396,546.5 L406.5,535.5 L568,535.5 L579.5,546.5 L590,535.5 L751,535.5 L762.5,546.5 L773,535.5 L934,535.5 L945,546.5 L990,546.5 L1005,531.3 L1018,531.3 L1031.3,518 L1062,518 L1074.3,530.2" fill="none" stroke="rgb(209,27,104)" stroke-width="3.8" stroke-linejoin="round"/><path d="M298,557.5 L444.4,557.5 L456.4,546.5 L467.9,557.5 L628.5,557.5 L640.5,546.5 L652,557.5 L811.5,557.5 L823.5,546.5 L835,557.5 L994.8,557.5 L1006.8,546.5 L1018.6,546.5 L1034.9,530.2 L1048.6,530.2" fill="none" stroke="rgb(209,27,104)" stroke-width="3.8" stroke-linejoin="round"/><path d="M298,566.1 L384.5,566.1 L396,577.1 L406.5,566.1 L568,566.1 L579.5,577.1 L590,566.1 L751,566.1 L762.5,577.1 L773,566.1 L934,566.1 L945,577.1 L990,577.1 L1005,561.9 L1018,561.9 L1037.5,542.4 L1062,542.4 L1074.3,554.6" fill="none" stroke="rgb(209,27,104)" stroke-width="3.8" stroke-linejoin="round"/><path d="M298,588.1 L444.4,588.1 L456.4,577.1 L467.9,588.1 L628.5,588.1 L640.5,577.1 L652,588.1 L811.5,588.1 L823.5,577.1 L835,588.1 L994.8,588.1 L1006.8,577.1 L1018.6,577.1 L1040,554.6 L1048.6,554.6" fill="none" stroke="rgb(209,27,104)" stroke-width="3.8" stroke-linejoin="round"/><path d="M298,596.7 L384.5,596.7 L396,607.7 L406.5,596.7 L568,596.7 L579.5,607.7 L590,596.7 L751,596.7 L762.5,607.7 L773,596.7 L934,596.7 L945,607.7 L990,607.7 L1005,592.5 L1018,592.5 L1040,566.8 L1062,566.8 L1074.3,579" fill="none" stroke="rgb(209,27,104)" stroke-width="3.8" stroke-linejoin="round"/><path d="M298,618.7 L811.5,618.7 L823.5,607.7 L835,618.7 L994.8,618.7 L1006.8,607.7 L1018.6,607.7 L1040,579 L1048.6,579" fill="none" stroke="rgb(209,27,104)" stroke-width="3.8" stroke-linejoin="round"/><path d="M298,627.3 L384.5,627.3 L396,638.3 L406.5,627.3 L568,627.3 L579.5,638.3 L590,627.3 L751,627.3 L762.5,638.3 L773,627.3 L934,627.3 L945,638.3 L990,638.3 L1005,623.1 L1018,623.1 L1040,591.2 L1062,591.2 L1074.3,603.4" fill="none" stroke="rgb(209,27,104)" stroke-width="3.8" stroke-linejoin="round"/><path d="M298,649.3 L811.5,649.3 L823.5,638.3 L835,649.3 L994.8,649.3 L1006.8,638.3 L1018.6,638.3 L1040,603.4 L1048.6,603.4" fill="none" stroke="rgb(209,27,104)" stroke-width="3.8" stroke-linejoin="round"/><path d="M298,657.8 L384.5,657.8 L396,668.8 L406.5,657.8 L568,657.8 L579.5,668.8 L590,657.8 L751,657.8 L762.5,668.8 L773,657.8 L934,657.8 L945,668.8 L990,668.8 L1005,653.6 L1018,653.6 L1040,615.6 L1062,615.6 L1074.3,627.8" fill="none" stroke="rgb(209,27,104)" stroke-width="3.8" stroke-linejoin="round"/><path d="M298,679.8 L628.5,679.8 L640.5,668.8 L652,679.8 L811.5,679.8 L823.5,668.8 L835,679.8 L994.8,679.8 L1006.8,668.8 L1018.6,668.8 L1040,627.8 L1048.6,627.8" fill="none" stroke="rgb(209,27,104)" stroke-width="3.8" stroke-linejoin="round"/><path d="M298,688.4 L384.5,688.4 L396,699.4 L406.5,688.4 L568,688.4 L579.5,699.4 L590,688.4 L751,688.4 L762.5,699.4 L773,688.4 L934,688.4 L945,699.4 L990,699.4 L1005,684.2 L1018,684.2 L1040,640 L1062,640 L1074.3,652.2" fill="none" stroke="rgb(209,27,104)" stroke-width="3.8" stroke-linejoin="round"/><path d="M298,710.4 L444.4,710.4 L456.4,699.4 L467.9,710.4 L628.5,710.4 L640.5,699.4 L652,710.4 L811.5,710.4 L823.5,699.4 L835,710.4 L994.8,710.4 L1006.8,699.4 L1018.6,699.4 L1040,652.2 L1048.6,652.2" fill="none" stroke="rgb(209,27,104)" stroke-width="3.8" stroke-linejoin="round"/><path d="M298,719 L384.5,719 L396,730 L406.5,719 L568,719 L579.5,730 L590,719 L751,719 L762.5,730 L773,719 L934,719 L945,730 L990,730 L1005,714.8 L1018,714.8 L1040,664.4 L1062,664.4 L1074.3,676.6" fill="none" stroke="rgb(209,27,104)" stroke-width="3.8" stroke-linejoin="round"/><path d="M298,741 L811.5,741 L823.5,730 L835,741 L994.8,741 L1006.8,730 L1018.6,730 L1040,676.6 L1048.6,676.6" fill="none" stroke="rgb(209,27,104)" stroke-width="3.8" stroke-linejoin="round"/><path d="M298,749.6 L384.5,749.6 L396,760.6 L406.5,749.6 L568,749.6 L579.5,760.6 L590,749.6 L751,749.6 L762.5,760.6 L773,749.6 L934,749.6 L945,760.6 L990,760.6 L1005,745.4 L1018,745.4" fill="none" stroke="rgb(209,27,104)" stroke-width="3.8" stroke-linejoin="round"/><path d="M298,771.6 L811.5,771.6 L823.5,760.6 L835,771.6 L994.8,771.6 L1006.8,760.6 L1018.6,760.6 L1040,715.6 L1047.7,715.6" fill="none" stroke="rgb(209,27,104)" stroke-width="3.8" stroke-linejoin="round"/><path d="M298,780.2 L384.5,780.2 L396,791.2 L406.5,780.2 L751,780.2 L762.5,791.2 L773,780.2 L934,780.2 L945,791.2 L990,791.2 L1005,776 L1018,776" fill="none" stroke="rgb(209,27,104)" stroke-width="3.8" stroke-linejoin="round"/><path d="M298,802.2 L444.4,802.2 L456.4,791.2 L467.9,802.2 L628.5,802.2 L640.5,791.2 L652,802.2 L811.5,802.2 L823.5,791.2 L835,802.2 L994.8,802.2 L1006.8,791.2 L1018.6,791.2 L1040,741.1 L1047.7,741.1" fill="none" stroke="rgb(209,27,104)" stroke-width="3.8" stroke-linejoin="round"/><path d="M456.4,607.7 L456.4,618.7" stroke="rgb(209,27,104)" stroke-width="3.8"/><path d="M640.5,607.7 L640.5,618.7" stroke="rgb(209,27,104)" stroke-width="3.8"/><path d="M456.4,638.3 L456.4,649.3" stroke="rgb(209,27,104)" stroke-width="3.8"/><path d="M640.5,638.3 L640.5,649.3" stroke="rgb(209,27,104)" stroke-width="3.8"/><path d="M456.4,668.8 L456.4,679.8" stroke="rgb(209,27,104)" stroke-width="3.8"/><path d="M456.4,730 L456.4,741" stroke="rgb(209,27,104)" stroke-width="3.8"/><path d="M640.5,730 L640.5,741" stroke="rgb(209,27,104)" stroke-width="3.8"/><path d="M456.4,760.6 L456.4,771.6" stroke="rgb(209,27,104)" stroke-width="3.8"/><path d="M640.5,760.6 L640.5,771.6" stroke="rgb(209,27,104)" stroke-width="3.8"/><path d="M579.5,791.2 L579.5,780.2" stroke="rgb(209,27,104)" stroke-width="3.8"/><circle cx="396" cy="87.8" r="6.8" fill="rgb(209,27,104)"/><circle cx="456.4" cy="87.8" r="6.8" fill="rgb(209,27,104)"/><circle cx="579.5" cy="87.8" r="6.8" fill="rgb(209,27,104)"/><circle cx="640.5" cy="87.8" r="6.8" fill="rgb(209,27,104)"/><circle cx="762.5" cy="87.8" r="6.8" fill="rgb(209,27,104)"/><circle cx="823.5" cy="87.8" r="6.8" fill="rgb(209,27,104)"/><circle cx="946" cy="87.8" r="6.8" fill="rgb(209,27,104)"/><circle cx="1007" cy="87.8" r="6.8" fill="rgb(209,27,104)"/><circle cx="396" cy="118.4" r="6.8" fill="rgb(209,27,104)"/><circle cx="456.4" cy="118.4" r="6.8" fill="rgb(209,27,104)"/><circle cx="579.5" cy="118.4" r="6.8" fill="rgb(209,27,104)"/><circle cx="640.5" cy="118.4" r="6.8" fill="rgb(209,27,104)"/><circle cx="762.5" cy="118.4" r="6.8" fill="rgb(209,27,104)"/><circle cx="823.5" cy="118.4" r="6.8" fill="rgb(209,27,104)"/><circle cx="946" cy="118.4" r="6.8" fill="rgb(209,27,104)"/><circle cx="1007" cy="118.4" r="6.8" fill="rgb(209,27,104)"/><circle cx="396" cy="149" r="6.8" fill="rgb(209,27,104)"/><circle cx="456.4" cy="149" r="6.8" fill="rgb(209,27,104)"/><circle cx="579.5" cy="149" r="6.8" fill="rgb(209,27,104)"/><circle cx="640.5" cy="149" r="6.8" fill="rgb(209,27,104)"/><circle cx="762.5" cy="149" r="6.8" fill="rgb(209,27,104)"/><circle cx="823.5" cy="149" r="6.8" fill="rgb(209,27,104)"/><circle cx="946" cy="149" r="6.8" fill="rgb(209,27,104)"/><circle cx="1007" cy="149" r="6.8" fill="rgb(209,27,104)"/><circle cx="396" cy="179.6" r="6.8" fill="rgb(209,27,104)"/><circle cx="456.4" cy="179.6" r="6.8" fill="rgb(209,27,104)"/><circle cx="579.5" cy="179.6" r="6.8" fill="rgb(209,27,104)"/><circle cx="640.5" cy="179.6" r="6.8" fill="rgb(209,27,104)"/><circle cx="762.5" cy="179.6" r="6.8" fill="rgb(209,27,104)"/><circle cx="823.5" cy="179.6" r="6.8" fill="rgb(209,27,104)"/><circle cx="946" cy="179.6" r="6.8" fill="rgb(209,27,104)"/><circle cx="1007" cy="179.6" r="6.8" fill="rgb(209,27,104)"/><circle cx="396" cy="210.1" r="6.8" fill="rgb(209,27,104)"/><circle cx="456.4" cy="210.1" r="6.8" fill="rgb(209,27,104)"/><circle cx="579.5" cy="210.1" r="6.8" fill="rgb(209,27,104)"/><circle cx="640.5" cy="210.1" r="6.8" fill="rgb(209,27,104)"/><circle cx="762.5" cy="210.1" r="6.8" fill="rgb(209,27,104)"/><circle cx="823.5" cy="210.1" r="6.8" fill="rgb(209,27,104)"/><circle cx="946" cy="210.1" r="6.8" fill="rgb(209,27,104)"/><circle cx="1007" cy="210.1" r="6.8" fill="rgb(209,27,104)"/><circle cx="396" cy="240.7" r="6.8" fill="rgb(209,27,104)"/><circle cx="456.4" cy="240.7" r="6.8" fill="rgb(209,27,104)"/><circle cx="579.5" cy="240.7" r="6.8" fill="rgb(209,27,104)"/><circle cx="640.5" cy="240.7" r="6.8" fill="rgb(209,27,104)"/><circle cx="762.5" cy="240.7" r="6.8" fill="rgb(209,27,104)"/><circle cx="823.5" cy="240.7" r="6.8" fill="rgb(209,27,104)"/><circle cx="946" cy="240.7" r="6.8" fill="rgb(209,27,104)"/><circle cx="1007" cy="240.7" r="6.8" fill="rgb(209,27,104)"/><circle cx="396" cy="271.3" r="6.8" fill="rgb(209,27,104)"/><circle cx="456.4" cy="271.3" r="6.8" fill="rgb(209,27,104)"/><circle cx="579.5" cy="271.3" r="6.8" fill="rgb(209,27,104)"/><circle cx="640.5" cy="271.3" r="6.8" fill="rgb(209,27,104)"/><circle cx="762.5" cy="271.3" r="6.8" fill="rgb(209,27,104)"/><circle cx="823.5" cy="271.3" r="6.8" fill="rgb(209,27,104)"/><circle cx="946" cy="271.3" r="6.8" fill="rgb(209,27,104)"/><circle cx="1007" cy="271.3" r="6.8" fill="rgb(209,27,104)"/><circle cx="396" cy="301.9" r="6.8" fill="rgb(209,27,104)"/><circle cx="456.4" cy="301.9" r="6.8" fill="rgb(209,27,104)"/><circle cx="579.5" cy="301.9" r="6.8" fill="rgb(209,27,104)"/><circle cx="640.5" cy="301.9" r="6.8" fill="rgb(209,27,104)"/><circle cx="762.5" cy="301.9" r="6.8" fill="rgb(209,27,104)"/><circle cx="823.5" cy="301.9" r="6.8" fill="rgb(209,27,104)"/><circle cx="946" cy="301.9" r="6.8" fill="rgb(209,27,104)"/><circle cx="1007" cy="301.9" r="6.8" fill="rgb(209,27,104)"/><circle cx="396" cy="332.5" r="6.8" fill="rgb(209,27,104)"/><circle cx="456.4" cy="332.5" r="6.8" fill="rgb(209,27,104)"/><circle cx="579.5" cy="332.5" r="6.8" fill="rgb(209,27,104)"/><circle cx="640.5" cy="332.5" r="6.8" fill="rgb(209,27,104)"/><circle cx="762.5" cy="332.5" r="6.8" fill="rgb(209,27,104)"/><circle cx="823.5" cy="332.5" r="6.8" fill="rgb(209,27,104)"/><circle cx="946" cy="332.5" r="6.8" fill="rgb(209,27,104)"/><circle cx="1007" cy="332.5" r="6.8" fill="rgb(209,27,104)"/><circle cx="396" cy="363" r="6.8" fill="rgb(209,27,104)"/><circle cx="456.4" cy="363" r="6.8" fill="rgb(209,27,104)"/><circle cx="579.5" cy="363" r="6.8" fill="rgb(209,27,104)"/><circle cx="640.5" cy="363" r="6.8" fill="rgb(209,27,104)"/><circle cx="762.5" cy="363" r="6.8" fill="rgb(209,27,104)"/><circle cx="823.5" cy="363" r="6.8" fill="rgb(209,27,104)"/><circle cx="946" cy="363" r="6.8" fill="rgb(209,27,104)"/><circle cx="1007" cy="363" r="6.8" fill="rgb(209,27,104)"/><circle cx="396" cy="393.6" r="6.8" fill="rgb(209,27,104)"/><circle cx="456.4" cy="393.6" r="6.8" fill="rgb(209,27,104)"/><circle cx="579.5" cy="393.6" r="6.8" fill="rgb(209,27,104)"/><circle cx="640.5" cy="393.6" r="6.8" fill="rgb(209,27,104)"/><circle cx="762.5" cy="393.6" r="6.8" fill="rgb(209,27,104)"/><circle cx="823.5" cy="393.6" r="6.8" fill="rgb(209,27,104)"/><circle cx="946" cy="393.6" r="6.8" fill="rgb(209,27,104)"/><circle cx="1007" cy="393.6" r="6.8" fill="rgb(209,27,104)"/><circle cx="396" cy="424.2" r="6.8" fill="rgb(209,27,104)"/><circle cx="456.4" cy="424.2" r="6.8" fill="rgb(209,27,104)"/><circle cx="579.5" cy="424.2" r="6.8" fill="rgb(209,27,104)"/><circle cx="640.5" cy="424.2" r="6.8" fill="rgb(209,27,104)"/><circle cx="762.5" cy="424.2" r="6.8" fill="rgb(209,27,104)"/><circle cx="823.5" cy="424.2" r="6.8" fill="rgb(209,27,104)"/><circle cx="946" cy="424.2" r="6.8" fill="rgb(209,27,104)"/><circle cx="1007" cy="424.2" r="6.8" fill="rgb(209,27,104)"/><circle cx="396" cy="454.8" r="6.8" fill="rgb(209,27,104)"/><circle cx="456.4" cy="454.8" r="6.8" fill="rgb(209,27,104)"/><circle cx="579.5" cy="454.8" r="6.8" fill="rgb(209,27,104)"/><circle cx="640.5" cy="454.8" r="6.8" fill="rgb(209,27,104)"/><circle cx="762.5" cy="454.8" r="6.8" fill="rgb(209,27,104)"/><circle cx="823.5" cy="454.8" r="6.8" fill="rgb(209,27,104)"/><circle cx="946" cy="454.8" r="6.8" fill="rgb(209,27,104)"/><circle cx="1007" cy="454.8" r="6.8" fill="rgb(209,27,104)"/><circle cx="396" cy="485.4" r="6.8" fill="rgb(209,27,104)"/><circle cx="456.4" cy="485.4" r="6.8" fill="rgb(209,27,104)"/><circle cx="579.5" cy="485.4" r="6.8" fill="rgb(209,27,104)"/><circle cx="640.5" cy="485.4" r="6.8" fill="rgb(209,27,104)"/><circle cx="762.5" cy="485.4" r="6.8" fill="rgb(209,27,104)"/><circle cx="823.5" cy="485.4" r="6.8" fill="rgb(209,27,104)"/><circle cx="946" cy="485.4" r="6.8" fill="rgb(209,27,104)"/><circle cx="1007" cy="485.4" r="6.8" fill="rgb(209,27,104)"/><circle cx="396" cy="515.9" r="6.8" fill="rgb(209,27,104)"/><circle cx="456.4" cy="515.9" r="6.8" fill="rgb(209,27,104)"/><circle cx="579.5" cy="515.9" r="6.8" fill="rgb(209,27,104)"/><circle cx="640.5" cy="515.9" r="6.8" fill="rgb(209,27,104)"/><circle cx="762.5" cy="515.9" r="6.8" fill="rgb(209,27,104)"/><circle cx="823.5" cy="515.9" r="6.8" fill="rgb(209,27,104)"/><circle cx="946" cy="515.9" r="6.8" fill="rgb(209,27,104)"/><circle cx="1007" cy="515.9" r="6.8" fill="rgb(209,27,104)"/><circle cx="396" cy="546.5" r="6.8" fill="rgb(209,27,104)"/><circle cx="456.4" cy="546.5" r="6.8" fill="rgb(209,27,104)"/><circle cx="579.5" cy="546.5" r="6.8" fill="rgb(209,27,104)"/><circle cx="640.5" cy="546.5" r="6.8" fill="rgb(209,27,104)"/><circle cx="762.5" cy="546.5" r="6.8" fill="rgb(209,27,104)"/><circle cx="823.5" cy="546.5" r="6.8" fill="rgb(209,27,104)"/><circle cx="946" cy="546.5" r="6.8" fill="rgb(209,27,104)"/><circle cx="1007" cy="546.5" r="6.8" fill="rgb(209,27,104)"/><circle cx="396" cy="577.1" r="6.8" fill="rgb(209,27,104)"/><circle cx="456.4" cy="577.1" r="6.8" fill="rgb(209,27,104)"/><circle cx="579.5" cy="577.1" r="6.8" fill="rgb(209,27,104)"/><circle cx="640.5" cy="577.1" r="6.8" fill="rgb(209,27,104)"/><circle cx="762.5" cy="577.1" r="6.8" fill="rgb(209,27,104)"/><circle cx="823.5" cy="577.1" r="6.8" fill="rgb(209,27,104)"/><circle cx="946" cy="577.1" r="6.8" fill="rgb(209,27,104)"/><circle cx="1007" cy="577.1" r="6.8" fill="rgb(209,27,104)"/><circle cx="396" cy="607.7" r="6.8" fill="rgb(209,27,104)"/><circle cx="456.4" cy="607.7" r="6.8" fill="rgb(209,27,104)"/><circle cx="579.5" cy="607.7" r="6.8" fill="rgb(209,27,104)"/><circle cx="640.5" cy="607.7" r="6.8" fill="rgb(209,27,104)"/><circle cx="762.5" cy="607.7" r="6.8" fill="rgb(209,27,104)"/><circle cx="823.5" cy="607.7" r="6.8" fill="rgb(209,27,104)"/><circle cx="946" cy="607.7" r="6.8" fill="rgb(209,27,104)"/><circle cx="1007" cy="607.7" r="6.8" fill="rgb(209,27,104)"/><circle cx="396" cy="638.3" r="6.8" fill="rgb(209,27,104)"/><circle cx="456.4" cy="638.3" r="6.8" fill="rgb(209,27,104)"/><circle cx="579.5" cy="638.3" r="6.8" fill="rgb(209,27,104)"/><circle cx="640.5" cy="638.3" r="6.8" fill="rgb(209,27,104)"/><circle cx="762.5" cy="638.3" r="6.8" fill="rgb(209,27,104)"/><circle cx="823.5" cy="638.3" r="6.8" fill="rgb(209,27,104)"/><circle cx="946" cy="638.3" r="6.8" fill="rgb(209,27,104)"/><circle cx="1007" cy="638.3" r="6.8" fill="rgb(209,27,104)"/><circle cx="396" cy="668.8" r="6.8" fill="rgb(209,27,104)"/><circle cx="456.4" cy="668.8" r="6.8" fill="rgb(209,27,104)"/><circle cx="579.5" cy="668.8" r="6.8" fill="rgb(209,27,104)"/><circle cx="640.5" cy="668.8" r="6.8" fill="rgb(209,27,104)"/><circle cx="762.5" cy="668.8" r="6.8" fill="rgb(209,27,104)"/><circle cx="823.5" cy="668.8" r="6.8" fill="rgb(209,27,104)"/><circle cx="946" cy="668.8" r="6.8" fill="rgb(209,27,104)"/><circle cx="1007" cy="668.8" r="6.8" fill="rgb(209,27,104)"/><circle cx="396" cy="699.4" r="6.8" fill="rgb(209,27,104)"/><circle cx="456.4" cy="699.4" r="6.8" fill="rgb(209,27,104)"/><circle cx="579.5" cy="699.4" r="6.8" fill="rgb(209,27,104)"/><circle cx="640.5" cy="699.4" r="6.8" fill="rgb(209,27,104)"/><circle cx="762.5" cy="699.4" r="6.8" fill="rgb(209,27,104)"/><circle cx="823.5" cy="699.4" r="6.8" fill="rgb(209,27,104)"/><circle cx="946" cy="699.4" r="6.8" fill="rgb(209,27,104)"/><circle cx="1007" cy="699.4" r="6.8" fill="rgb(209,27,104)"/><circle cx="396" cy="730" r="6.8" fill="rgb(209,27,104)"/><circle cx="456.4" cy="730" r="6.8" fill="rgb(209,27,104)"/><circle cx="579.5" cy="730" r="6.8" fill="rgb(209,27,104)"/><circle cx="640.5" cy="730" r="6.8" fill="rgb(209,27,104)"/><circle cx="762.5" cy="730" r="6.8" fill="rgb(209,27,104)"/><circle cx="823.5" cy="730" r="6.8" fill="rgb(209,27,104)"/><circle cx="946" cy="730" r="6.8" fill="rgb(209,27,104)"/><circle cx="1007" cy="730" r="6.8" fill="rgb(209,27,104)"/><circle cx="396" cy="760.6" r="6.8" fill="rgb(209,27,104)"/><circle cx="456.4" cy="760.6" r="6.8" fill="rgb(209,27,104)"/><circle cx="579.5" cy="760.6" r="6.8" fill="rgb(209,27,104)"/><circle cx="640.5" cy="760.6" r="6.8" fill="rgb(209,27,104)"/><circle cx="762.5" cy="760.6" r="6.8" fill="rgb(209,27,104)"/><circle cx="823.5" cy="760.6" r="6.8" fill="rgb(209,27,104)"/><circle cx="946" cy="760.6" r="6.8" fill="rgb(209,27,104)"/><circle cx="1007" cy="760.6" r="6.8" fill="rgb(209,27,104)"/><circle cx="396" cy="791.2" r="6.8" fill="rgb(209,27,104)"/><circle cx="456.4" cy="791.2" r="6.8" fill="rgb(209,27,104)"/><circle cx="579.5" cy="791.2" r="6.8" fill="rgb(209,27,104)"/><circle cx="640.5" cy="791.2" r="6.8" fill="rgb(209,27,104)"/><circle cx="762.5" cy="791.2" r="6.8" fill="rgb(209,27,104)"/><circle cx="823.5" cy="791.2" r="6.8" fill="rgb(209,27,104)"/><circle cx="946" cy="791.2" r="6.8" fill="rgb(209,27,104)"/><circle cx="1007" cy="791.2" r="6.8" fill="rgb(209,27,104)"/><circle cx="1048.5" cy="89.9" r="6.8" fill="rgb(209,27,104)"/><circle cx="1074.3" cy="89.9" r="6.8" fill="rgb(209,27,104)"/><circle cx="1048.5" cy="114.3" r="6.8" fill="rgb(209,27,104)"/><circle cx="1074.3" cy="114.3" r="6.8" fill="rgb(209,27,104)"/><circle cx="1048.5" cy="138.7" r="6.8" fill="rgb(209,27,104)"/><circle cx="1074.3" cy="138.7" r="6.8" fill="rgb(209,27,104)"/><rect x="1043" y="182" width="11" height="11" fill="rgb(209,27,104)"/><rect x="1068.8" y="182" width="11" height="11" fill="rgb(209,27,104)"/><circle cx="1048.5" cy="211.9" r="6.8" fill="rgb(209,27,104)"/><circle cx="1074.3" cy="211.9" r="6.8" fill="rgb(209,27,104)"/><circle cx="1048.5" cy="236.3" r="6.8" fill="rgb(209,27,104)"/><circle cx="1074.3" cy="236.3" r="6.8" fill="rgb(209,27,104)"/><circle cx="1048.5" cy="260.7" r="6.8" fill="rgb(209,27,104)"/><circle cx="1074.3" cy="260.7" r="6.8" fill="rgb(209,27,104)"/><circle cx="1048.5" cy="285.1" r="6.8" fill="rgb(209,27,104)"/><circle cx="1074.3" cy="285.1" r="6.8" fill="rgb(209,27,104)"/><circle cx="1048.5" cy="309.5" r="6.8" fill="rgb(209,27,104)"/><circle cx="1074.3" cy="309.5" r="6.8" fill="rgb(209,27,104)"/><circle cx="1048.5" cy="333.9" r="6.8" fill="rgb(209,27,104)"/><circle cx="1074.3" cy="333.9" r="6.8" fill="rgb(209,27,104)"/><circle cx="1048.5" cy="358.3" r="6.8" fill="rgb(209,27,104)"/><circle cx="1074.3" cy="358.3" r="6.8" fill="rgb(209,27,104)"/><circle cx="1048.5" cy="382.7" r="6.8" fill="rgb(209,27,104)"/><circle cx="1074.3" cy="382.7" r="6.8" fill="rgb(209,27,104)"/><circle cx="1048.5" cy="407.1" r="6.8" fill="rgb(209,27,104)"/><circle cx="1074.3" cy="407.1" r="6.8" fill="rgb(209,27,104)"/><rect x="1043" y="451.5" width="11" height="11" fill="rgb(209,27,104)"/><rect x="1068.8" y="451.5" width="11" height="11" fill="rgb(209,27,104)"/><circle cx="1048.5" cy="481.4" r="6.8" fill="rgb(209,27,104)"/><circle cx="1074.3" cy="481.4" r="6.8" fill="rgb(209,27,104)"/><circle cx="1048.5" cy="505.8" r="6.8" fill="rgb(209,27,104)"/><circle cx="1074.3" cy="505.8" r="6.8" fill="rgb(209,27,104)"/><circle cx="1048.5" cy="530.2" r="6.8" fill="rgb(209,27,104)"/><circle cx="1074.3" cy="530.2" r="6.8" fill="rgb(209,27,104)"/><circle cx="1048.5" cy="554.6" r="6.8" fill="rgb(209,27,104)"/><circle cx="1074.3" cy="554.6" r="6.8" fill="rgb(209,27,104)"/><circle cx="1048.5" cy="579" r="6.8" fill="rgb(209,27,104)"/><circle cx="1074.3" cy="579" r="6.8" fill="rgb(209,27,104)"/><circle cx="1048.5" cy="603.4" r="6.8" fill="rgb(209,27,104)"/><circle cx="1074.3" cy="603.4" r="6.8" fill="rgb(209,27,104)"/><circle cx="1048.5" cy="627.8" r="6.8" fill="rgb(209,27,104)"/><circle cx="1074.3" cy="627.8" r="6.8" fill="rgb(209,27,104)"/><circle cx="1048.5" cy="652.2" r="6.8" fill="rgb(209,27,104)"/><circle cx="1074.3" cy="652.2" r="6.8" fill="rgb(209,27,104)"/><circle cx="1048.5" cy="676.6" r="6.8" fill="rgb(209,27,104)"/><circle cx="1074.3" cy="676.6" r="6.8" fill="rgb(209,27,104)"/><path d="M1118,90 L1118,706 L1124,712 L1124,792" fill="none" stroke="#000" stroke-width="19.6" stroke-linejoin="round" stroke-linecap="round"/><path d="M1118,158 L1105,171 L1090,186" fill="none" stroke="#000" stroke-width="13.1" stroke-linejoin="round" stroke-linecap="round"/><path d="M1251,90 L1251,103.3 L1298.9,151.4 L1298.9,225.4 L1312.2,236 L1312.2,256 L1245,323 L1245,371 L1256,384 L1271.7,384.4" fill="none" stroke="#000" stroke-width="13.1" stroke-linejoin="round" stroke-linecap="round"/><path d="M1277.3,90 L1277.3,97 L1323,142.7 L1323,200.2 L1361,235.7" fill="none" stroke="#000" stroke-width="13.1" stroke-linejoin="round" stroke-linecap="round"/><path d="M1338.7,90 L1338.7,120.6 L1440,221 L1440,262 L1411.3,291 L1411.3,310" fill="none" stroke="#000" stroke-width="13.4" stroke-linejoin="round" stroke-linecap="round"/><path d="M1126,469.3 L1193,469.3 L1252,411 L1271.7,408.8" fill="none" stroke="#000" stroke-width="15.1" stroke-linejoin="round" stroke-linecap="round"/><path d="M1106,431 L1118,431" fill="none" stroke="#000" stroke-width="13.1" stroke-linejoin="round" stroke-linecap="round"/><path d="M1313.2,310 L1313.2,498.5 L1268,498.5" fill="none" stroke="#000" stroke-width="20.1" stroke-linejoin="round" stroke-linecap="round"/><path d="M1313.2,414.7 L1395,414.7 L1471.7,338 L1471.7,269.5" fill="none" stroke="#000" stroke-width="20.6" stroke-linejoin="round" stroke-linecap="round"/><path d="M1274.5,651 L1252,651 L1245,658 L1245,745 L1250,754.7" fill="none" stroke="#000" stroke-width="13.1" stroke-linejoin="round" stroke-linecap="round"/><path d="M1245,705 L1236,716" fill="none" stroke="#000" stroke-width="13.1" stroke-linejoin="round" stroke-linecap="round"/><rect x="1427" y="477.1" width="90.7" height="89.2" fill="none" stroke="#000" stroke-width="3.4"/><path d="M1428,90 V116 H1518.8 V90" fill="none" stroke="#000" stroke-width="3.4"/><circle cx="1312.2" cy="235.7" r="8.8" fill="#000"/><circle cx="1312.2" cy="310" r="8.8" fill="#000"/><circle cx="1336.7" cy="235.7" r="8.8" fill="#000"/><circle cx="1336.7" cy="310" r="8.8" fill="#000"/><circle cx="1361" cy="235.7" r="8.8" fill="#000"/><circle cx="1361" cy="310" r="8.8" fill="#000"/><circle cx="1386.6" cy="235.7" r="8.8" fill="#000"/><circle cx="1386.6" cy="310" r="8.8" fill="#000"/><circle cx="1411.3" cy="235.7" r="8.8" fill="#000"/><circle cx="1411.3" cy="310" r="8.8" fill="#000"/><circle cx="1212.3" cy="147.9" r="10" fill="#000"/><circle cx="1315" cy="100" r="10" fill="#000"/><circle cx="1203.4" cy="192.5" r="10.2" fill="#000"/><circle cx="1203.4" cy="239.9" r="10.2" fill="#000"/><circle cx="1251.6" cy="215.8" r="10.2" fill="#000"/><rect x="1145.8" y="306.4" width="18.4" height="18.4" fill="#000"/><rect x="1189.2" y="351.2" width="18" height="18" fill="#000"/><circle cx="1271.7" cy="360.2" r="9.6" fill="#000"/><circle cx="1198.2" cy="384.4" r="9.6" fill="#000"/><circle cx="1271.7" cy="384.4" r="9.6" fill="#000"/><circle cx="1198.2" cy="408.8" r="9.6" fill="#000"/><circle cx="1271.7" cy="408.8" r="9.6" fill="#000"/><circle cx="1198.2" cy="432.4" r="9.6" fill="#000"/><circle cx="1271.7" cy="432.4" r="9.6" fill="#000"/><rect x="1462" y="265" width="19.4" height="12" fill="#000"/><circle cx="1313.3" cy="545.5" r="10" fill="#000"/><rect x="1153.8" y="615.8" width="16.5" height="16.5" fill="#000"/><circle cx="1197.8" cy="624.2" r="9.6" fill="#000"/><circle cx="1197.8" cy="651.3" r="9.6" fill="#000"/><circle cx="1197.8" cy="678.6" r="9.6" fill="#000"/><rect x="1265.5" y="615.2" width="18" height="18" fill="#000"/><circle cx="1274.5" cy="651.3" r="9.6" fill="#000"/><circle cx="1274.5" cy="678.6" r="9.6" fill="#000"/><circle cx="1235.8" cy="718.5" r="9.6" fill="#000"/><rect x="1167.2" y="745.7" width="18" height="18" fill="#000"/><circle cx="1176.2" cy="779.1" r="9.6" fill="#000"/><circle cx="1176.2" cy="803.5" r="9.6" fill="#000"/><circle cx="1176.2" cy="827.9" r="9.6" fill="#000"/><circle cx="1176.2" cy="852.3" r="9.6" fill="#000"/><circle cx="1176.2" cy="876.7" r="9.6" fill="#000"/><circle cx="1176.2" cy="901.1" r="9.6" fill="#000"/><circle cx="1250" cy="754.7" r="9.6" fill="#000"/><circle cx="1250" cy="779.1" r="9.6" fill="#000"/><circle cx="1250" cy="803.5" r="9.6" fill="#000"/><circle cx="1250" cy="827.9" r="9.6" fill="#000"/><circle cx="1250" cy="852.3" r="9.6" fill="#000"/><circle cx="1250" cy="876.7" r="9.6" fill="#000"/><circle cx="1250" cy="901.1" r="9.6" fill="#000"/><circle cx="1441.5" cy="715.9" r="9.6" fill="#000"/><circle cx="1441.5" cy="789.6" r="9.6" fill="#000"/><rect x="1320.8" y="817.4" width="20" height="20" fill="#000"/><circle cx="1047.7" cy="715.6" r="9" fill="#000"/><circle cx="1047.7" cy="741.1" r="9" fill="#000"/><circle cx="1047.7" cy="764.8" r="9" fill="#000"/><circle cx="1047.7" cy="789.3" r="9" fill="#000"/><circle cx="425.5" cy="901.5" r="22" fill="none" stroke="#000" stroke-width="3.6"/><circle cx="608.3" cy="901.5" r="22" fill="none" stroke="#000" stroke-width="3.6"/><circle cx="792" cy="901.5" r="22" fill="none" stroke="#000" stroke-width="3.6"/><circle cx="975.9" cy="901.5" r="22" fill="none" stroke="#000" stroke-width="3.6"/><path d="M1118,90 L1118,706 L1124,712 L1124,792" fill="none" stroke="rgb(209,27,104)" stroke-width="12.4" stroke-linejoin="round" stroke-linecap="round"/><path d="M1118,158 L1105,171 L1090,186" fill="none" stroke="rgb(209,27,104)" stroke-width="5.9" stroke-linejoin="round" stroke-linecap="round"/><path d="M1251,90 L1251,103.3 L1298.9,151.4 L1298.9,225.4 L1312.2,236 L1312.2,256 L1245,323 L1245,371 L1256,384 L1271.7,384.4" fill="none" stroke="rgb(209,27,104)" stroke-width="5.9" stroke-linejoin="round" stroke-linecap="round"/><path d="M1277.3,90 L1277.3,97 L1323,142.7 L1323,200.2 L1361,235.7" fill="none" stroke="rgb(209,27,104)" stroke-width="5.9" stroke-linejoin="round" stroke-linecap="round"/><path d="M1338.7,90 L1338.7,120.6 L1440,221 L1440,262 L1411.3,291 L1411.3,310" fill="none" stroke="rgb(209,27,104)" stroke-width="6.2" stroke-linejoin="round" stroke-linecap="round"/><path d="M1126,469.3 L1193,469.3 L1252,411 L1271.7,408.8" fill="none" stroke="rgb(209,27,104)" stroke-width="7.9" stroke-linejoin="round" stroke-linecap="round"/><path d="M1106,431 L1118,431" fill="none" stroke="rgb(209,27,104)" stroke-width="5.9" stroke-linejoin="round" stroke-linecap="round"/><path d="M1313.2,310 L1313.2,498.5 L1268,498.5" fill="none" stroke="rgb(209,27,104)" stroke-width="12.9" stroke-linejoin="round" stroke-linecap="round"/><path d="M1313.2,414.7 L1395,414.7 L1471.7,338 L1471.7,269.5" fill="none" stroke="rgb(209,27,104)" stroke-width="13.4" stroke-linejoin="round" stroke-linecap="round"/><path d="M1274.5,651 L1252,651 L1245,658 L1245,745 L1250,754.7" fill="none" stroke="rgb(209,27,104)" stroke-width="5.9" stroke-linejoin="round" stroke-linecap="round"/><path d="M1245,705 L1236,716" fill="none" stroke="rgb(209,27,104)" stroke-width="5.9" stroke-linejoin="round" stroke-linecap="round"/><circle cx="1312.2" cy="235.7" r="5.4" fill="rgb(209,27,104)"/><circle cx="1312.2" cy="310" r="5.4" fill="rgb(209,27,104)"/><circle cx="1336.7" cy="235.7" r="5.4" fill="rgb(209,27,104)"/><circle cx="1336.7" cy="310" r="5.4" fill="rgb(209,27,104)"/><circle cx="1361" cy="235.7" r="5.4" fill="rgb(209,27,104)"/><circle cx="1361" cy="310" r="5.4" fill="rgb(209,27,104)"/><circle cx="1386.6" cy="235.7" r="5.4" fill="rgb(209,27,104)"/><circle cx="1386.6" cy="310" r="5.4" fill="rgb(209,27,104)"/><circle cx="1411.3" cy="235.7" r="5.4" fill="rgb(209,27,104)"/><circle cx="1411.3" cy="310" r="5.4" fill="rgb(209,27,104)"/><circle cx="1212.3" cy="147.9" r="6.4" fill="rgb(209,27,104)"/><circle cx="1315" cy="100" r="6.4" fill="rgb(209,27,104)"/><circle cx="1203.4" cy="192.5" r="6.6" fill="rgb(209,27,104)"/><circle cx="1203.4" cy="239.9" r="6.6" fill="rgb(209,27,104)"/><circle cx="1251.6" cy="215.8" r="6.6" fill="rgb(209,27,104)"/><rect x="1149.4" y="310" width="11.2" height="11.2" fill="rgb(209,27,104)"/><rect x="1192.8" y="354.8" width="10.8" height="10.8" fill="rgb(209,27,104)"/><circle cx="1271.7" cy="360.2" r="6" fill="rgb(209,27,104)"/><circle cx="1198.2" cy="384.4" r="6" fill="rgb(209,27,104)"/><circle cx="1271.7" cy="384.4" r="6" fill="rgb(209,27,104)"/><circle cx="1198.2" cy="408.8" r="6" fill="rgb(209,27,104)"/><circle cx="1271.7" cy="408.8" r="6" fill="rgb(209,27,104)"/><circle cx="1198.2" cy="432.4" r="6" fill="rgb(209,27,104)"/><circle cx="1271.7" cy="432.4" r="6" fill="rgb(209,27,104)"/><circle cx="1313.3" cy="545.5" r="6.4" fill="rgb(209,27,104)"/><rect x="1157.3" y="619.4" width="9.3" height="9.3" fill="rgb(209,27,104)"/><circle cx="1197.8" cy="624.2" r="6" fill="rgb(209,27,104)"/><circle cx="1197.8" cy="651.3" r="6" fill="rgb(209,27,104)"/><circle cx="1197.8" cy="678.6" r="6" fill="rgb(209,27,104)"/><rect x="1269.1" y="618.8" width="10.8" height="10.8" fill="rgb(209,27,104)"/><circle cx="1274.5" cy="651.3" r="6" fill="rgb(209,27,104)"/><circle cx="1274.5" cy="678.6" r="6" fill="rgb(209,27,104)"/><circle cx="1235.8" cy="718.5" r="6" fill="rgb(209,27,104)"/><rect x="1170.8" y="749.3" width="10.8" height="10.8" fill="rgb(209,27,104)"/><circle cx="1176.2" cy="779.1" r="6" fill="rgb(209,27,104)"/><circle cx="1176.2" cy="803.5" r="6" fill="rgb(209,27,104)"/><circle cx="1176.2" cy="827.9" r="6" fill="rgb(209,27,104)"/><circle cx="1176.2" cy="852.3" r="6" fill="rgb(209,27,104)"/><circle cx="1176.2" cy="876.7" r="6" fill="rgb(209,27,104)"/><circle cx="1176.2" cy="901.1" r="6" fill="rgb(209,27,104)"/><circle cx="1250" cy="754.7" r="6" fill="rgb(209,27,104)"/><circle cx="1250" cy="779.1" r="6" fill="rgb(209,27,104)"/><circle cx="1250" cy="803.5" r="6" fill="rgb(209,27,104)"/><circle cx="1250" cy="827.9" r="6" fill="rgb(209,27,104)"/><circle cx="1250" cy="852.3" r="6" fill="rgb(209,27,104)"/><circle cx="1250" cy="876.7" r="6" fill="rgb(209,27,104)"/><circle cx="1250" cy="901.1" r="6" fill="rgb(209,27,104)"/><circle cx="1441.5" cy="715.9" r="6" fill="rgb(209,27,104)"/><circle cx="1441.5" cy="789.6" r="6" fill="rgb(209,27,104)"/><rect x="1324.4" y="821" width="12.8" height="12.8" fill="rgb(209,27,104)"/><circle cx="1047.7" cy="715.6" r="5.4" fill="rgb(209,27,104)"/><circle cx="1047.7" cy="741.1" r="5.4" fill="rgb(209,27,104)"/><circle cx="1047.7" cy="764.8" r="5.4" fill="rgb(209,27,104)"/><circle cx="1047.7" cy="789.3" r="5.4" fill="rgb(209,27,104)"/><rect x="1543" y="97" width="80" height="808" fill="#000"/></g>
<g opacity="0.694"><text transform="translate(425,124.5) rotate(-90) scale(0.855,1)" text-anchor="start" y="6.1" font-family="Liberation Sans" font-size="17.4" fill="rgb(213,253,51)" stroke="rgb(213,253,51)" stroke-width="0.6">S10</text><text transform="translate(608.2,124.5) rotate(-90) scale(0.855,1)" text-anchor="start" y="6.1" font-family="Liberation Sans" font-size="17.4" fill="rgb(213,253,51)" stroke="rgb(213,253,51)" stroke-width="0.6">S10</text><text transform="translate(792.2,124.5) rotate(-90) scale(0.855,1)" text-anchor="start" y="6.1" font-family="Liberation Sans" font-size="17.4" fill="rgb(213,253,51)" stroke="rgb(213,253,51)" stroke-width="0.6">S10</text><text transform="translate(975,124.5) rotate(-90) scale(0.855,1)" text-anchor="start" y="6.1" font-family="Liberation Sans" font-size="17.4" fill="rgb(213,253,51)" stroke="rgb(213,253,51)" stroke-width="0.6">S10</text><text transform="translate(912.4,147.5) rotate(90) scale(0.66,1)" text-anchor="end" y="8.5" font-family="Liberation Sans" font-size="23" fill="rgb(213,253,51)" stroke="rgb(213,253,51)" stroke-width="0.2" xml:space="preserve">COMPONENT  SIDE</text><text transform="translate(912,822) rotate(0) scale(0.715,1)" text-anchor="middle" y="8.8" font-family="Liberation Sans" font-size="25.1" fill="rgb(213,253,51)" stroke="rgb(213,253,51)" stroke-width="0.6">50</text><text transform="translate(1044.5,822) rotate(0) scale(0.739,1)" text-anchor="middle" y="8.8" font-family="Liberation Sans" font-size="25.1" fill="rgb(213,253,51)" stroke="rgb(213,253,51)" stroke-width="0.6">100</text><rect x="1037.5" y="97" width="49.3" height="54.8" fill="none" stroke="rgb(213,253,51)" stroke-width="3.4"/><path d="M1062.5,97 L1062.5,151.8" fill="none" stroke="rgb(213,253,51)" stroke-width="3.4"/><rect x="1037.5" y="175.4" width="49.3" height="244.6" fill="none" stroke="rgb(213,253,51)" stroke-width="3.4"/><path d="M1062.5,175.4 L1062.5,420" fill="none" stroke="rgb(213,253,51)" stroke-width="3.4"/><path d="M1037.5,199.7 L1086.8,199.7" fill="none" stroke="rgb(213,253,51)" stroke-width="3.4"/><rect x="1037.5" y="445" width="49.3" height="245" fill="none" stroke="rgb(213,253,51)" stroke-width="3.4"/><path d="M1062.5,445 L1062.5,690" fill="none" stroke="rgb(213,253,51)" stroke-width="3.4"/><path d="M1037.5,469.3 L1086.8,469.3" fill="none" stroke="rgb(213,253,51)" stroke-width="3.4"/><text transform="translate(1030,182.5) rotate(-90) scale(0.897,1)" text-anchor="middle" y="5.8" font-family="Liberation Sans" font-size="16.7" fill="rgb(213,253,51)" stroke="rgb(213,253,51)" stroke-width="0.6">RR9</text><text transform="translate(1096,184) rotate(-90) scale(0.868,1)" text-anchor="middle" y="6.2" font-family="Liberation Sans" font-size="17.9" fill="rgb(213,253,51)" stroke="rgb(213,253,51)" stroke-width="0.6">RR4</text><text transform="translate(1096,291) rotate(-90) scale(0.940,1)" text-anchor="middle" y="6.2" font-family="Liberation Sans" font-size="17.9" fill="rgb(213,253,51)" stroke="rgb(213,253,51)" stroke-width="0.6">270</text><text transform="translate(1029,457.7) rotate(-90) scale(1.027,1)" text-anchor="middle" y="6" font-family="Liberation Sans" font-size="17.1" fill="rgb(213,253,51)" stroke="rgb(213,253,51)" stroke-width="0.6">RR10</text><text transform="translate(1094.5,462.4) rotate(-90) scale(0.915,1)" text-anchor="middle" y="6.2" font-family="Liberation Sans" font-size="17.9" fill="rgb(213,253,51)" stroke="rgb(213,253,51)" stroke-width="0.6">RR5</text><text transform="translate(1096.7,566) rotate(-90) scale(0.890,1)" text-anchor="middle" y="6.2" font-family="Liberation Sans" font-size="17.9" fill="rgb(213,253,51)" stroke="rgb(213,253,51)" stroke-width="0.6">270</text><circle cx="1129.6" cy="161.3" r="29.9" fill="none" stroke="rgb(213,253,51)" stroke-width="1.2"/><text transform="translate(1130,120.7) rotate(0) scale(0.755,1)" text-anchor="middle" y="5.8" font-family="Liberation Sans" font-size="16.6" fill="rgb(213,253,51)" stroke="rgb(213,253,51)" stroke-width="0.6">C6</text><text transform="translate(1129.7,145.7) rotate(0) scale(0.811,1)" text-anchor="middle" y="5.8" font-family="Liberation Sans" font-size="16.6" fill="rgb(213,253,51)" stroke="rgb(213,253,51)" stroke-width="0.6">39 UF</text><path d="M1101.5,162 L1112.5,162" fill="none" stroke="rgb(213,253,51)" stroke-width="2"/><path d="M1107,156.5 L1107,167.5" fill="none" stroke="rgb(213,253,51)" stroke-width="2"/><text transform="translate(1167,217.5) rotate(-90) scale(0.693,1)" text-anchor="middle" y="10" font-family="Liberation Sans" font-size="28.6" fill="rgb(213,253,51)" stroke="rgb(213,253,51)" stroke-width="0.8">ADJUST</text><rect x="1190" y="179" width="76.8" height="75.1" fill="none" stroke="rgb(213,253,51)" stroke-width="3.6"/><text transform="translate(1212,213.8) rotate(-90) scale(0.891,1)" text-anchor="middle" y="7.2" font-family="Liberation Sans" font-size="20.7" fill="rgb(213,253,51)" stroke="rgb(213,253,51)" stroke-width="0.6">R1</text><text transform="translate(1234.6,217) rotate(-90) scale(0.749,1)" text-anchor="middle" y="7.2" font-family="Liberation Sans" font-size="20.4" fill="rgb(213,253,51)" stroke="rgb(213,253,51)" stroke-width="0.6">TRIMPOT</text><rect x="1202.5" y="90" width="20.5" height="54.3" fill="none" stroke="rgb(213,253,51)" stroke-width="3.2"/><text transform="translate(1213,127) rotate(-90) scale(1.018,1)" text-anchor="start" y="7.5" font-family="Liberation Sans" font-size="21.4" fill="rgb(213,253,51)" stroke="rgb(213,253,51)" stroke-width="0.6">R10</text><text transform="translate(1345,116) rotate(-90) scale(0.665,1)" text-anchor="middle" y="7.5" font-family="Liberation Sans" font-size="21.4" fill="rgb(213,253,51)">Q4</text><rect x="1363" y="90" width="148.6" height="31.4" fill="none" stroke="rgb(213,253,51)" stroke-width="3.2"/><path d="M1437.9,97 L1437.9,121.4" fill="none" stroke="rgb(213,253,51)" stroke-width="3.2"/><text transform="translate(1417.3,100) rotate(-90) scale(0.964,1)" text-anchor="middle" y="7" font-family="Liberation Sans" font-size="20" fill="rgb(213,253,51)" stroke="rgb(213,253,51)" stroke-width="0.6">TIP</text><rect x="1302.2" y="241.4" width="20" height="64.8" fill="none" stroke="rgb(213,253,51)" stroke-width="3.2"/><path d="M1312.2,236 L1312.2,241.4" fill="none" stroke="rgb(213,253,51)" stroke-width="2"/><path d="M1312.2,306.2 L1312.2,311" fill="none" stroke="rgb(213,253,51)" stroke-width="2"/><text transform="translate(1312.2,273.8) rotate(-90) scale(1.004,1)" text-anchor="middle" y="6" font-family="Liberation Sans" font-size="17.1" fill="rgb(213,253,51)" stroke="rgb(213,253,51)" stroke-width="0.6">R5</text><rect x="1326.7" y="241.4" width="20" height="64.8" fill="none" stroke="rgb(213,253,51)" stroke-width="3.2"/><path d="M1336.7,236 L1336.7,241.4" fill="none" stroke="rgb(213,253,51)" stroke-width="2"/><path d="M1336.7,306.2 L1336.7,311" fill="none" stroke="rgb(213,253,51)" stroke-width="2"/><text transform="translate(1336.7,273.8) rotate(-90) scale(1.004,1)" text-anchor="middle" y="6" font-family="Liberation Sans" font-size="17.1" fill="rgb(213,253,51)" stroke="rgb(213,253,51)" stroke-width="0.6">R4</text><rect x="1351" y="241.4" width="20" height="64.8" fill="none" stroke="rgb(213,253,51)" stroke-width="3.2"/><path d="M1361,236 L1361,241.4" fill="none" stroke="rgb(213,253,51)" stroke-width="2"/><path d="M1361,306.2 L1361,311" fill="none" stroke="rgb(213,253,51)" stroke-width="2"/><text transform="translate(1361,273.8) rotate(-90) scale(1.004,1)" text-anchor="middle" y="6" font-family="Liberation Sans" font-size="17.1" fill="rgb(213,253,51)" stroke="rgb(213,253,51)" stroke-width="0.6">R3</text><rect x="1376.6" y="241.4" width="20" height="64.8" fill="none" stroke="rgb(213,253,51)" stroke-width="3.2"/><path d="M1386.6,236 L1386.6,241.4" fill="none" stroke="rgb(213,253,51)" stroke-width="2"/><path d="M1386.6,306.2 L1386.6,311" fill="none" stroke="rgb(213,253,51)" stroke-width="2"/><text transform="translate(1386.6,273.8) rotate(-90) scale(1.004,1)" text-anchor="middle" y="6" font-family="Liberation Sans" font-size="17.1" fill="rgb(213,253,51)" stroke="rgb(213,253,51)" stroke-width="0.6">R2</text><rect x="1401.3" y="241.4" width="20" height="64.8" fill="none" stroke="rgb(213,253,51)" stroke-width="3.2"/><path d="M1411.3,236 L1411.3,241.4" fill="none" stroke="rgb(213,253,51)" stroke-width="2"/><path d="M1411.3,306.2 L1411.3,311" fill="none" stroke="rgb(213,253,51)" stroke-width="2"/><text transform="translate(1411.3,273.8) rotate(-90) scale(1.004,1)" text-anchor="middle" y="6" font-family="Liberation Sans" font-size="17.1" fill="rgb(213,253,51)" stroke="rgb(213,253,51)" stroke-width="0.6">R9</text><circle cx="1166.7" cy="314.3" r="30.2" fill="none" stroke="rgb(213,253,51)" stroke-width="1.2"/><text transform="translate(1165.4,298.6) rotate(0) scale(0.856,1)" text-anchor="middle" y="5.8" font-family="Liberation Sans" font-size="16.4" fill="rgb(213,253,51)" stroke="rgb(213,253,51)" stroke-width="0.6">0.47 UF</text><text transform="translate(1166.7,356.3) rotate(0) scale(0.762,1)" text-anchor="middle" y="5.8" font-family="Liberation Sans" font-size="16.4" fill="rgb(213,253,51)" stroke="rgb(213,253,51)" stroke-width="0.6">C2</text><path d="M1136.5,315.5 L1146.5,315.5" fill="none" stroke="rgb(213,253,51)" stroke-width="2"/><path d="M1141.5,310.5 L1141.5,320.5" fill="none" stroke="rgb(213,253,51)" stroke-width="2"/><rect x="1210" y="347" width="50.4" height="98.5" fill="none" stroke="rgb(213,253,51)" stroke-width="2.2"/><rect x="1223.2" y="347" width="23.6" height="13.2" fill="none" stroke="rgb(213,253,51)" stroke-width="2.2"/><text transform="translate(1235,335.3) rotate(0) scale(0.900,1)" text-anchor="middle" y="6" font-family="Liberation Sans" font-size="17.1" fill="rgb(213,253,51)" stroke="rgb(213,253,51)" stroke-width="0.6">IC2</text><text transform="translate(1233.7,397) rotate(-90) scale(0.869,1)" text-anchor="middle" y="6" font-family="Liberation Sans" font-size="17.1" fill="rgb(213,253,51)" stroke="rgb(213,253,51)" stroke-width="0.6">LM4250</text><circle cx="1129.5" cy="429.2" r="30" fill="none" stroke="rgb(213,253,51)" stroke-width="1.2"/><text transform="translate(1131,413.5) rotate(0) scale(0.811,1)" text-anchor="middle" y="5.8" font-family="Liberation Sans" font-size="16.6" fill="rgb(213,253,51)" stroke="rgb(213,253,51)" stroke-width="0.6">39 UF</text><text transform="translate(1129.5,470.3) rotate(0) scale(0.755,1)" text-anchor="middle" y="5.8" font-family="Liberation Sans" font-size="16.6" fill="rgb(213,253,51)" stroke="rgb(213,253,51)" stroke-width="0.6">C7</text><path d="M1101,431 L1111,431" fill="none" stroke="rgb(213,253,51)" stroke-width="2"/><path d="M1106,426 L1106,436" fill="none" stroke="rgb(213,253,51)" stroke-width="2"/><circle cx="1484.3" cy="273.7" r="30.2" fill="none" stroke="rgb(213,253,51)" stroke-width="1.2"/><text transform="translate(1483.8,258) rotate(0) scale(0.811,1)" text-anchor="middle" y="5.8" font-family="Liberation Sans" font-size="16.6" fill="rgb(213,253,51)" stroke="rgb(213,253,51)" stroke-width="0.6">39 UF</text><text transform="translate(1485,313.5) rotate(0) scale(0.755,1)" text-anchor="middle" y="5.8" font-family="Liberation Sans" font-size="16.6" fill="rgb(213,253,51)" stroke="rgb(213,253,51)" stroke-width="0.6">C8</text><path d="M1454.6,274.9 L1464.6,274.9" fill="none" stroke="rgb(213,253,51)" stroke-width="2"/><path d="M1459.6,269.9 L1459.6,279.9" fill="none" stroke="rgb(213,253,51)" stroke-width="2"/><circle cx="1261.8" cy="498.8" r="30" fill="none" stroke="rgb(213,253,51)" stroke-width="1.2"/><text transform="translate(1261.5,512.5) rotate(0) scale(0.811,1)" text-anchor="middle" y="5.8" font-family="Liberation Sans" font-size="16.6" fill="rgb(213,253,51)" stroke="rgb(213,253,51)" stroke-width="0.6">39 UF</text><text transform="translate(1262,540.5) rotate(0) scale(0.755,1)" text-anchor="middle" y="5.8" font-family="Liberation Sans" font-size="16.6" fill="rgb(213,253,51)" stroke="rgb(213,253,51)" stroke-width="0.6">C1</text><path d="M1281,500 L1291,500" fill="none" stroke="rgb(213,253,51)" stroke-width="2.2"/><path d="M1286,495 L1286,505" fill="none" stroke="rgb(213,253,51)" stroke-width="2.2"/><rect x="1362.2" y="473.1" width="147.9" height="97.8" fill="none" stroke="rgb(213,253,51)" stroke-width="3.2"/><path d="M1437,473.1 L1437,570.9" fill="none" stroke="rgb(213,253,51)" stroke-width="3.2"/><path d="M1313,498.3 L1362.2,498.3" fill="none" stroke="rgb(213,253,51)" stroke-width="3.2"/><path d="M1313,521.7 L1362.2,521.7" fill="none" stroke="rgb(213,253,51)" stroke-width="3.2"/><path d="M1313,546.2 L1362.2,546.2" fill="none" stroke="rgb(213,253,51)" stroke-width="3.2"/><text transform="translate(1385.4,521.7) rotate(-90) scale(0.688,1)" text-anchor="middle" y="7" font-family="Liberation Sans" font-size="20" fill="rgb(213,253,51)" stroke="rgb(213,253,51)" stroke-width="0.6">IC1</text><text transform="translate(1414.3,521.7) rotate(-90) scale(0.724,1)" text-anchor="middle" y="7.5" font-family="Liberation Sans" font-size="21.4" fill="rgb(213,253,51)" stroke="rgb(213,253,51)" stroke-width="0.6">7805</text><text transform="translate(1325,569) rotate(0) scale(0.839,1)" text-anchor="middle" y="6" font-family="Liberation Sans" font-size="17.1" fill="rgb(213,253,51)" stroke="rgb(213,253,51)" stroke-width="0.6">+5V</text><text transform="translate(1589.4,180.6) rotate(-90) scale(0.839,1)" text-anchor="middle" y="6.5" font-family="Liberation Sans" font-size="18.6" fill="rgb(213,253,51)" stroke="rgb(213,253,51)" stroke-width="0.6">270</text><text transform="translate(1587,305) rotate(-90) scale(0.839,1)" text-anchor="middle" y="6.5" font-family="Liberation Sans" font-size="18.6" fill="rgb(213,253,51)" stroke="rgb(213,253,51)" stroke-width="0.6">270</text><text transform="translate(1598.3,572.1) rotate(-90) scale(0.839,1)" text-anchor="middle" y="6.5" font-family="Liberation Sans" font-size="18.6" fill="rgb(213,253,51)" stroke="rgb(213,253,51)" stroke-width="0.6">270</text><circle cx="1163" cy="611.3" r="24" fill="none" stroke="rgb(213,253,51)" stroke-width="1.2"/><text transform="translate(1131.5,612) rotate(-90) scale(0.916,1)" text-anchor="middle" y="5" font-family="Liberation Sans" font-size="14.3" fill="rgb(213,253,51)" stroke="rgb(213,253,51)" stroke-width="0.6">C13</text><text transform="translate(1176.5,612.7) rotate(-90) scale(0.700,1)" text-anchor="middle" y="4.5" font-family="Liberation Sans" font-size="12.9" fill="rgb(213,253,51)" stroke="rgb(213,253,51)" stroke-width="0.6">10UF</text><path d="M1157.5,632 L1166.5,632" fill="none" stroke="rgb(213,253,51)" stroke-width="1.8"/><path d="M1162,628 L1162,636" fill="none" stroke="rgb(213,253,51)" stroke-width="1.8"/><rect x="1206" y="614.5" width="61" height="20.5" fill="none" stroke="rgb(213,253,51)" stroke-width="3.2"/><path d="M1259,614.5 L1259,635" fill="none" stroke="rgb(213,253,51)" stroke-width="3.5"/><text transform="translate(1236,624.6) rotate(0) scale(0.832,1)" text-anchor="middle" y="6.2" font-family="Liberation Sans" font-size="17.9" fill="rgb(213,253,51)" stroke="rgb(213,253,51)" stroke-width="0.6">D1</text><rect x="1204.7" y="642.5" width="64.5" height="19.9" fill="none" stroke="rgb(213,253,51)" stroke-width="3.2"/><text transform="translate(1236,652.3) rotate(0) scale(0.910,1)" text-anchor="middle" y="6.5" font-family="Liberation Sans" font-size="18.6" fill="rgb(213,253,51)" stroke="rgb(213,253,51)" stroke-width="0.6">R16</text><rect x="1204.7" y="668.7" width="64.5" height="20.3" fill="none" stroke="rgb(213,253,51)" stroke-width="3.2"/><text transform="translate(1236,678.8) rotate(0) scale(0.910,1)" text-anchor="middle" y="6.5" font-family="Liberation Sans" font-size="18.6" fill="rgb(213,253,51)" stroke="rgb(213,253,51)" stroke-width="0.6">R15</text><path d="M1197.8,624.2 L1204.7,624.2" fill="none" stroke="rgb(213,253,51)" stroke-width="2"/><path d="M1269.2,624.2 L1276,624.2" fill="none" stroke="rgb(213,253,51)" stroke-width="2"/><path d="M1197.8,651.3 L1204.7,651.3" fill="none" stroke="rgb(213,253,51)" stroke-width="2"/><path d="M1269.2,651.3 L1276,651.3" fill="none" stroke="rgb(213,253,51)" stroke-width="2"/><path d="M1197.8,678.6 L1204.7,678.6" fill="none" stroke="rgb(213,253,51)" stroke-width="2"/><path d="M1269.2,678.6 L1276,678.6" fill="none" stroke="rgb(213,253,51)" stroke-width="2"/><rect x="1177.5" y="707.6" width="69.9" height="20.7" fill="none" stroke="rgb(213,253,51)" stroke-width="3.2"/><text transform="translate(1212.5,717.5) rotate(0) scale(0.876,1)" text-anchor="middle" y="5" font-family="Liberation Sans" font-size="14.3" fill="rgb(213,253,51)" stroke="rgb(213,253,51)" stroke-width="0.6">C9</text><rect x="1187.9" y="728.8" width="50.4" height="183.2" fill="none" stroke="rgb(213,253,51)" stroke-width="3.2"/><rect x="1200" y="728.8" width="25.4" height="15.5" fill="none" stroke="rgb(213,253,51)" stroke-width="3.2"/><text transform="translate(1225.4,780.6) rotate(-90) scale(0.789,1)" text-anchor="middle" y="7.5" font-family="Liberation Sans" font-size="21.4" fill="rgb(213,253,51)" stroke="rgb(213,253,51)" stroke-width="0.5">U23</text><text transform="translate(1200,841.4) rotate(-90) scale(0.717,1)" text-anchor="middle" y="8.5" font-family="Liberation Sans" font-size="24.3" fill="rgb(213,253,51)" stroke="rgb(213,253,51)" stroke-width="0.5">74LS04</text><text transform="translate(1357.4,749.5) rotate(-90) scale(0.775,1)" text-anchor="middle" y="8.4" font-family="Liberation Sans" font-size="24" fill="rgb(213,253,51)" stroke="rgb(213,253,51)" stroke-width="0.6">RESET</text><rect x="1380.7" y="715.9" width="73.7" height="74.5" fill="none" stroke="rgb(213,253,51)" stroke-width="1.3"/><circle cx="1416.9" cy="752.1" r="24" fill="none" stroke="rgb(213,253,51)" stroke-width="1.2"/><text transform="translate(1409,752) rotate(-90) scale(0.775,1)" text-anchor="middle" y="5" font-family="Liberation Sans" font-size="14.3" fill="rgb(213,253,51)" stroke="rgb(213,253,51)" stroke-width="0.6">SW1</text><text transform="translate(1426,752) rotate(-90) scale(0.798,1)" text-anchor="middle" y="5.5" font-family="Liberation Sans" font-size="15.7" fill="rgb(213,253,51)" stroke="rgb(213,253,51)" stroke-width="0.6">SW_PUSH</text><text transform="translate(1318.6,800) rotate(0) scale(0.689,1)" text-anchor="middle" y="8" font-family="Liberation Sans" font-size="22.9" fill="rgb(213,253,51)" stroke="rgb(213,253,51)" stroke-width="0.6">P12</text><rect x="1294" y="815.5" width="50.5" height="25.1" fill="none" stroke="rgb(213,253,51)" stroke-width="3.2"/><rect x="1054.3" y="706.2" width="65.2" height="21.1" fill="none" stroke="rgb(213,253,51)" stroke-width="3.2"/><text transform="translate(1087,716.8) rotate(0) scale(1.071,1)" text-anchor="middle" y="6.5" font-family="Liberation Sans" font-size="18.6" fill="rgb(213,253,51)" stroke="rgb(213,253,51)" stroke-width="0.6">R11</text><path d="M1047.7,716.8 L1054.3,716.8" fill="none" stroke="rgb(213,253,51)" stroke-width="2"/><path d="M1119.5,716.8 L1127,716.8" fill="none" stroke="rgb(213,253,51)" stroke-width="2"/><rect x="1054.3" y="730.7" width="65.2" height="20.8" fill="none" stroke="rgb(213,253,51)" stroke-width="3.2"/><text transform="translate(1087,741.1) rotate(0) scale(1.027,1)" text-anchor="middle" y="6.5" font-family="Liberation Sans" font-size="18.6" fill="rgb(213,253,51)" stroke="rgb(213,253,51)" stroke-width="0.6">R13</text><path d="M1047.7,741.1 L1054.3,741.1" fill="none" stroke="rgb(213,253,51)" stroke-width="2"/><path d="M1119.5,741.1 L1127,741.1" fill="none" stroke="rgb(213,253,51)" stroke-width="2"/><rect x="1054.3" y="755.3" width="65.2" height="20.8" fill="none" stroke="rgb(213,253,51)" stroke-width="3.2"/><text transform="translate(1087,765.7) rotate(0) scale(1.027,1)" text-anchor="middle" y="6.5" font-family="Liberation Sans" font-size="18.6" fill="rgb(213,253,51)" stroke="rgb(213,253,51)" stroke-width="0.6">R12</text><path d="M1047.7,765.7 L1054.3,765.7" fill="none" stroke="rgb(213,253,51)" stroke-width="2"/><path d="M1119.5,765.7 L1127,765.7" fill="none" stroke="rgb(213,253,51)" stroke-width="2"/><rect x="1054.3" y="779.5" width="65.2" height="20.8" fill="none" stroke="rgb(213,253,51)" stroke-width="3.2"/><text transform="translate(1087,789.9) rotate(0) scale(1.027,1)" text-anchor="middle" y="6.5" font-family="Liberation Sans" font-size="18.6" fill="rgb(213,253,51)" stroke="rgb(213,253,51)" stroke-width="0.6">R14</text><path d="M1047.7,789.9 L1054.3,789.9" fill="none" stroke="rgb(213,253,51)" stroke-width="2"/><path d="M1119.5,789.9 L1127,789.9" fill="none" stroke="rgb(213,253,51)" stroke-width="2"/><circle cx="333.6" cy="901.5" r="22" fill="none" stroke="rgb(213,253,51)" stroke-width="3.5"/><circle cx="700.7" cy="901.5" r="22" fill="none" stroke="rgb(213,253,51)" stroke-width="3.5"/><circle cx="1076" cy="901.5" r="22" fill="none" stroke="rgb(213,253,51)" stroke-width="3.5"/><circle cx="1312" cy="901.5" r="22" fill="none" stroke="rgb(213,253,51)" stroke-width="3.5"/><rect x="379.1" y="97" width="3.8" height="808" fill="rgb(213,253,51)"/><rect x="469" y="97" width="3.8" height="808" fill="rgb(213,253,51)"/><rect x="379.1" y="869.5" width="93.7" height="3.8" fill="rgb(213,253,51)"/><rect x="562.6" y="97" width="3.8" height="808" fill="rgb(213,253,51)"/><rect x="653.1" y="97" width="3.8" height="808" fill="rgb(213,253,51)"/><rect x="562.6" y="869.5" width="94.3" height="3.8" fill="rgb(213,253,51)"/><rect x="745.6" y="97" width="3.8" height="808" fill="rgb(213,253,51)"/><rect x="836.1" y="97" width="3.8" height="808" fill="rgb(213,253,51)"/><rect x="745.6" y="869.5" width="94.3" height="3.8" fill="rgb(213,253,51)"/><rect x="929.1" y="97" width="3.8" height="808" fill="rgb(213,253,51)"/><rect x="1019.1" y="97" width="3.8" height="808" fill="rgb(213,253,51)"/><rect x="929.1" y="869.5" width="93.8" height="3.8" fill="rgb(213,253,51)"/></g>
</svg>

<!-- scrollbar -->
<div class="a" style="left:298px;top:905px;width:1318px;height:16px;background:#eaeaea"></div>
<div class="a" style="left:1289px;top:907px;width:327px;height:14px;border:1px solid #8f8f8f;border-radius:2px;background:linear-gradient(#f7f7f7 0%,#ececec 45%,#dadada 55%,#d2d2d2 100%)"></div>
<svg class="a" style="left:298px;top:905px" width="1320" height="16" viewBox="298 905 1320 16"><rect x="299" y="906" width="16" height="14" fill="#e3e3e3"/><path d="M309,909 L304.5,913 L309,917Z" fill="#555"/><path d="M1467.5,909.5 v7 M1470.5,909.5 v7 M1473.5,909.5 v7" stroke="#444" stroke-width="1.2"/></svg>
<svg class="a" style="left:286px;top:876px" width="12" height="14" viewBox="0 0 12 14"><path d="M5,1.5 L11,7 L5,12.5Z" fill="#000"/></svg>
<!-- status bar -->
<div class="t" style="left:292px;top:931px;font-size:11px">(21176.27, -10907.70)</div>
<div class="a" style="left:421px;top:926px;width:52px;height:21px;border:1px solid #aaa;background:#fff"></div>
<div class="t" style="left:424px;top:931px;font-size:11.5px">mil</div>
<div class="a" style="left:455px;top:927px;width:17px;height:19px;border:1px solid #8a8a8a;background:linear-gradient(#f4f4f4,#d8d8d8)"></div>
<div class="a" style="left:459px;top:934px;width:0;height:0;border-left:4.5px solid transparent;border-right:4.5px solid transparent;border-top:5px solid #000"></div>
<div class="t" style="left:483px;top:931px;font-size:12px">Click to select objects in the current layer. Middle click and drag to pan.</div>
<div class="a" style="left:0;top:950px;width:1623px;height:2px;background:#4a7a8c"></div>
<div class="a" style="left:1616px;top:828px;width:7px;height:124px;border-radius:5px 0 0 0;background:linear-gradient(90deg,#6d7a84,#c9d3da 40%,#8c99a3)"></div>
</body></html>
